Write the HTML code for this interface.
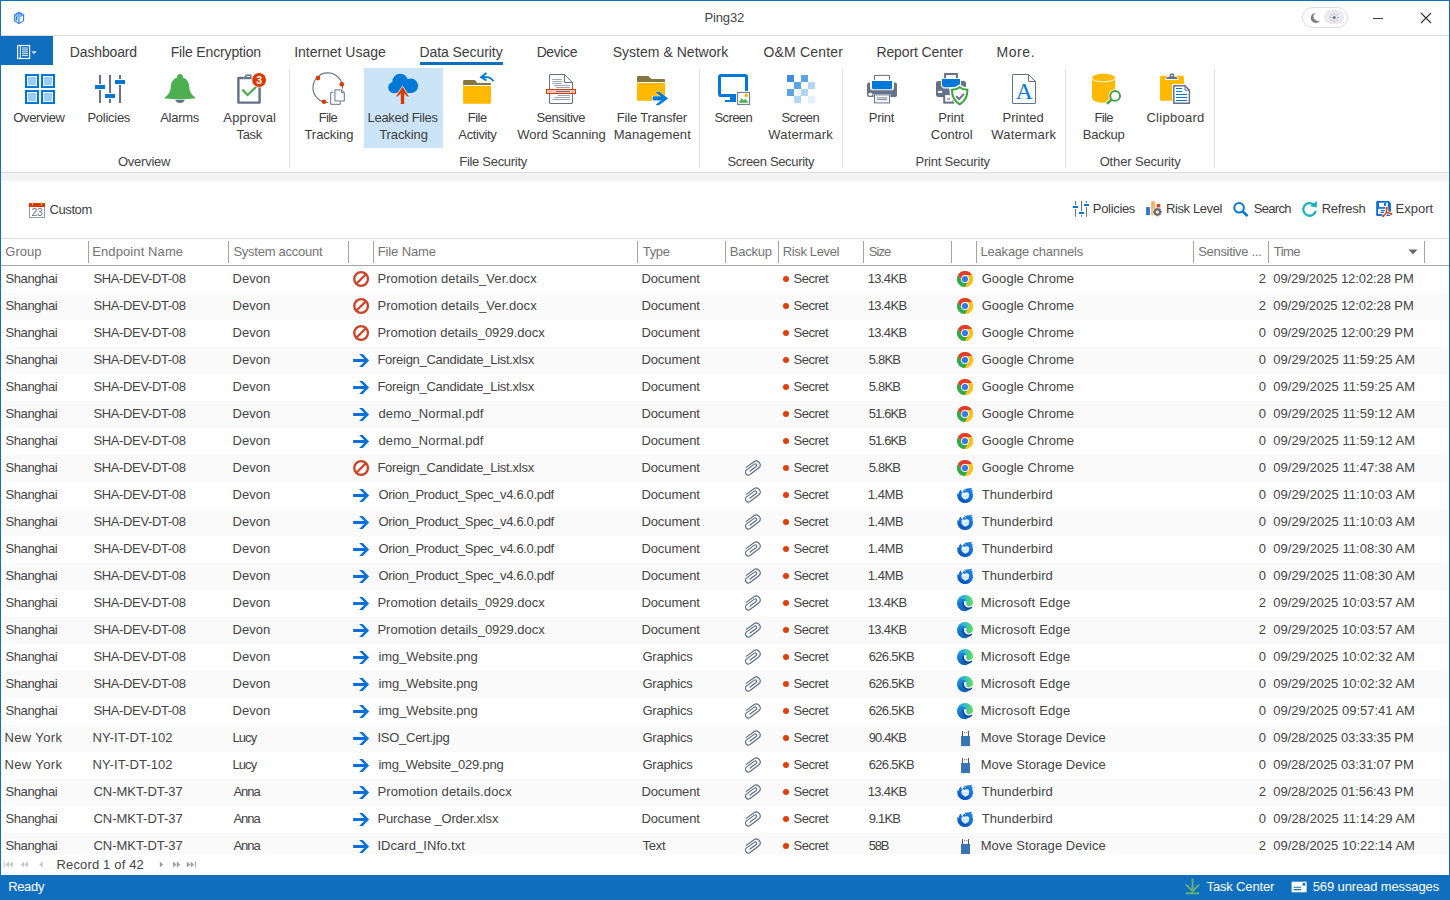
<!DOCTYPE html>
<html><head><meta charset="utf-8"><title>Ping32</title>
<style>
html,body{margin:0;padding:0;}
body{width:1450px;height:900px;overflow:hidden;background:#fff;font-family:"Liberation Sans",sans-serif;}
#win{position:relative;width:1450px;height:900px;overflow:hidden;background:#fff;}
.r{position:absolute;display:block;}
.t{position:absolute;white-space:pre;height:20px;line-height:20px;}
</style></head><body><div id="win">
<div class="r" style="left:0px;top:0px;width:1450px;height:1px;background:#106ebe;"></div>
<div class="r" style="left:0px;top:0px;width:1px;height:900px;background:#106ebe;"></div>
<div class="r" style="left:1449px;top:0px;width:1px;height:900px;background:#106ebe;"></div>
<div class="r" style="left:1px;top:35px;width:1448px;height:1px;background:#dcdcdc;"></div>
<span class="t" style="left:704.55px;top:8.00px;font-size:13px;color:#444;letter-spacing:-0.160px;">Ping32</span>
<div class="r" style="left:1302px;top:7px;width:44px;height:19px;background:#fff;border:1px solid #dcdcdc;border-radius:11px;"></div>
<div class="r" style="left:1324px;top:10px;width:20px;height:14px;background:#ebebef;border-radius:7px;"></div>
<div class="r" style="left:1373px;top:18px;width:10px;height:1px;background:#3d3d3d;"></div>
<svg class="r" style="left:1420px;top:12px" width="12" height="12" viewBox="0 0 12 12"><path d="M1 1 L11 11 M11 1 L1 11" stroke="#333" stroke-width="1.1" fill="none"/></svg>
<div class="r" style="left:0px;top:36px;width:53px;height:29px;background:#106ebe;"></div>
<span class="t" style="left:69.85px;top:42.20px;font-size:14px;color:#3d3d3d;letter-spacing:-0.162px;">Dashboard</span>
<span class="t" style="left:170.65px;top:42.20px;font-size:14px;color:#3d3d3d;letter-spacing:-0.150px;">File Encryption</span>
<span class="t" style="left:294.25px;top:42.20px;font-size:14px;color:#3d3d3d;letter-spacing:-0.031px;">Internet Usage</span>
<span class="t" style="left:419.45px;top:42.20px;font-size:14px;color:#3d3d3d;letter-spacing:-0.067px;">Data Security</span>
<span class="t" style="left:536.65px;top:42.20px;font-size:14px;color:#3d3d3d;letter-spacing:-0.400px;">Device</span>
<span class="t" style="left:612.65px;top:42.20px;font-size:14px;color:#3d3d3d;letter-spacing:0.033px;">System &amp; Network</span>
<span class="t" style="left:763.45px;top:42.20px;font-size:14px;color:#3d3d3d;letter-spacing:0.189px;">O&amp;M Center</span>
<span class="t" style="left:876.45px;top:42.20px;font-size:14px;color:#3d3d3d;letter-spacing:-0.108px;">Report Center</span>
<span class="t" style="left:996.45px;top:42.20px;font-size:14px;color:#3d3d3d;letter-spacing:0.575px;">More.</span>
<div class="r" style="left:420px;top:62px;width:83px;height:3px;background:#106ebe;"></div>
<div class="r" style="left:364px;top:68px;width:79px;height:80px;background:#cce4f7;"></div>
<div class="r" style="left:289px;top:69px;width:1px;height:99px;background:#e1e1e1;"></div>
<div class="r" style="left:699px;top:69px;width:1px;height:99px;background:#e1e1e1;"></div>
<div class="r" style="left:842px;top:69px;width:1px;height:99px;background:#e1e1e1;"></div>
<div class="r" style="left:1065px;top:69px;width:1px;height:99px;background:#e1e1e1;"></div>
<div class="r" style="left:1214px;top:69px;width:1px;height:99px;background:#e1e1e1;"></div>
<span class="t" style="left:13.25px;top:107.50px;font-size:13px;color:#3d3d3d;letter-spacing:-0.357px;">Overview</span>
<span class="t" style="left:87.45px;top:107.50px;font-size:13px;color:#3d3d3d;letter-spacing:-0.271px;">Policies</span>
<span class="t" style="left:160.25px;top:107.50px;font-size:13px;color:#3d3d3d;letter-spacing:-0.300px;">Alarms</span>
<span class="t" style="left:223.35px;top:107.50px;font-size:13px;color:#3d3d3d;letter-spacing:0.186px;">Approval</span>
<span class="t" style="left:236.45px;top:124.50px;font-size:13px;color:#3d3d3d;letter-spacing:-0.300px;">Task</span>
<span class="t" style="left:318.85px;top:107.50px;font-size:13px;color:#3d3d3d;letter-spacing:-0.700px;">File</span>
<span class="t" style="left:304.45px;top:124.50px;font-size:13px;color:#3d3d3d;letter-spacing:-0.043px;">Tracking</span>
<span class="t" style="left:367.55px;top:107.50px;font-size:13px;color:#3d3d3d;letter-spacing:-0.300px;">Leaked Files</span>
<span class="t" style="left:379.25px;top:124.50px;font-size:13px;color:#3d3d3d;letter-spacing:-0.100px;">Tracking</span>
<span class="t" style="left:467.65px;top:107.50px;font-size:13px;color:#3d3d3d;letter-spacing:-0.433px;">File</span>
<span class="t" style="left:458.35px;top:124.50px;font-size:13px;color:#3d3d3d;letter-spacing:-0.386px;">Activity</span>
<span class="t" style="left:536.55px;top:107.50px;font-size:13px;color:#3d3d3d;letter-spacing:-0.462px;">Sensitive</span>
<span class="t" style="left:517.35px;top:124.50px;font-size:13px;color:#3d3d3d;letter-spacing:-0.025px;">Word Scanning</span>
<span class="t" style="left:616.65px;top:107.50px;font-size:13px;color:#3d3d3d;letter-spacing:-0.142px;">File Transfer</span>
<span class="t" style="left:613.65px;top:124.50px;font-size:13px;color:#3d3d3d;letter-spacing:0.144px;">Management</span>
<span class="t" style="left:714.45px;top:107.50px;font-size:13px;color:#3d3d3d;letter-spacing:-0.580px;">Screen</span>
<span class="t" style="left:781.45px;top:107.50px;font-size:13px;color:#3d3d3d;letter-spacing:-0.580px;">Screen</span>
<span class="t" style="left:768.35px;top:124.50px;font-size:13px;color:#3d3d3d;letter-spacing:0.163px;">Watermark</span>
<span class="t" style="left:868.85px;top:107.50px;font-size:13px;color:#3d3d3d;letter-spacing:-0.325px;">Print</span>
<span class="t" style="left:938.15px;top:107.50px;font-size:13px;color:#3d3d3d;letter-spacing:-0.175px;">Print</span>
<span class="t" style="left:930.75px;top:124.50px;font-size:13px;color:#3d3d3d;letter-spacing:0.017px;">Control</span>
<span class="t" style="left:1002.55px;top:107.50px;font-size:13px;color:#3d3d3d;letter-spacing:0.017px;">Printed</span>
<span class="t" style="left:991.35px;top:124.50px;font-size:13px;color:#3d3d3d;letter-spacing:0.188px;">Watermark</span>
<span class="t" style="left:1094.55px;top:107.50px;font-size:13px;color:#3d3d3d;letter-spacing:-0.633px;">File</span>
<span class="t" style="left:1082.75px;top:124.50px;font-size:13px;color:#3d3d3d;letter-spacing:-0.260px;">Backup</span>
<span class="t" style="left:1146.40px;top:107.50px;font-size:13px;color:#3d3d3d;letter-spacing:0.275px;">Clipboard</span>
<span class="t" style="left:117.90px;top:152.00px;font-size:13px;color:#444;letter-spacing:-0.229px;">Overview</span>
<span class="t" style="left:459.25px;top:152.00px;font-size:13px;color:#444;letter-spacing:-0.292px;">File Security</span>
<span class="t" style="left:727.45px;top:152.00px;font-size:13px;color:#444;letter-spacing:-0.336px;">Screen Security</span>
<span class="t" style="left:915.45px;top:152.00px;font-size:13px;color:#444;letter-spacing:-0.208px;">Print Security</span>
<span class="t" style="left:1099.65px;top:152.00px;font-size:13px;color:#444;letter-spacing:-0.146px;">Other Security</span>
<div class="r" style="left:1px;top:172px;width:1448px;height:1px;background:#dcdcdc;"></div>
<div class="r" style="left:1px;top:173px;width:1448px;height:8px;background:#f3f3f3;"></div>
<span class="t" style="left:49.55px;top:199.50px;font-size:13px;color:#3d3d3d;letter-spacing:-0.420px;">Custom</span>
<span class="t" style="left:1092.85px;top:198.50px;font-size:13px;color:#3d3d3d;letter-spacing:-0.329px;">Policies</span>
<span class="t" style="left:1165.95px;top:198.50px;font-size:13px;color:#3d3d3d;letter-spacing:-0.389px;">Risk Level</span>
<span class="t" style="left:1253.85px;top:198.50px;font-size:13px;color:#3d3d3d;letter-spacing:-0.700px;">Search</span>
<span class="t" style="left:1321.75px;top:198.50px;font-size:13px;color:#3d3d3d;letter-spacing:-0.267px;">Refresh</span>
<span class="t" style="left:1395.55px;top:198.50px;font-size:13px;color:#3d3d3d;letter-spacing:0.020px;">Export</span>
<div class="r" style="left:0px;top:875px;width:1450px;height:25px;background:#106ebe;"></div>
<span class="t" style="left:8.15px;top:876.50px;font-size:13px;color:#fff;letter-spacing:-0.325px;">Ready</span>
<span class="t" style="left:1206.55px;top:876.50px;font-size:13px;color:#fff;letter-spacing:-0.160px;">Task Center</span>
<span class="t" style="left:1312.75px;top:876.50px;font-size:13px;color:#fff;letter-spacing:-0.122px;">569 unread messages</span>
<span class="t" style="left:56.45px;top:854.50px;font-size:13px;color:#444;letter-spacing:0.162px;">Record 1 of 42</span>
<svg class="r" style="left:12px;top:10px" width="14" height="16" viewBox="0 0 14 16"><path d="M7 2.2 L11.6 5 L7 7.9 L2.5 4.9 Z" fill="#4c95f6"/>
<path d="M2.5 4.9 L7 7.9 V13.6 L2.5 10.9 Z" fill="#9cc4fb" fill-opacity=".7"/>
<path d="M4.9 3.7 L9.3 6.4 M3.6 4.4 L8 7.2 M8.6 3.3 L4.2 6 M10.2 4.2 L5.8 7" stroke="#a9cdfc" stroke-width=".6"/>
<g fill="none" stroke="#2f7cf0" stroke-width="1.1" stroke-linejoin="round">
<path d="M7 2.2 L11.6 5 L11.6 10.6 L7 13.6 L2.5 10.9 L2.5 4.9 Z"/><path d="M7 7.9 V13.6"/></g>
<rect x="4" y="6.4" width="1" height="3.8" rx=".4" fill="#246fe6"/></svg>
<svg class="r" style="left:16px;top:44px" width="24" height="16" viewBox="0 0 24 16"><rect x="1.6" y="1.5" width="12" height="13" fill="none" stroke="#fff" stroke-width="1.2"/>
<path d="M4.3 1.5 V14.5" stroke="#fff" stroke-width="1"/>
<path d="M6 4 H12 M6 5.9 H12 M6 7.8 H12 M6 9.7 H12 M6 11.6 H12" stroke="#fff" stroke-width=".9"/>
<path d="M15.3 7.2 H20.7 L18 10.2 Z" fill="#d6e6f6"/></svg>
<svg class="r" style="left:1308px;top:11px" width="14" height="14" viewBox="0 0 14 14"><path d="M7.6 1.9 A5 5 0 1 0 12.1 9.3 A4.2 4.2 0 0 1 7.6 1.9 Z" fill="#808080"/></svg>
<svg class="r" style="left:1327px;top:10px" width="14" height="14" viewBox="0 0 14 14"><circle cx="7.2" cy="7.5" r="1.5" fill="#6a7896"/>
<g stroke="#9aa3b5" stroke-width=".9"><path d="M7.2 2.8 V4.6 M7.2 10.4 V12.2 M2.5 7.5 H4.3 M10.1 7.5 H11.9 M3.9 4.2 L5.1 5.4 M9.3 9.6 L10.5 10.8 M3.9 10.8 L5.1 9.6 M9.3 5.4 L10.5 4.2"/></g></svg>
<svg class="r" style="left:22px;top:70px" width="36" height="38" viewBox="0 0 36 38"><rect x="4" y="5" width="12" height="12" fill="#fff" stroke="#0078d7" stroke-width="2"/><rect x="6" y="7" width="8" height="8" fill="#99ccff"/><rect x="20" y="5" width="12" height="12" fill="#fff" stroke="#0078d7" stroke-width="2"/><rect x="22" y="7" width="8" height="8" fill="#99ccff"/><rect x="4" y="21" width="12" height="12" fill="#fff" stroke="#0078d7" stroke-width="2"/><rect x="6" y="23" width="8" height="8" fill="#99ccff"/><rect x="20" y="21" width="12" height="12" fill="#fff" stroke="#0078d7" stroke-width="2"/><rect x="22" y="23" width="8" height="8" fill="#99ccff"/></svg>
<svg class="r" style="left:92px;top:70px" width="36" height="38" viewBox="0 0 36 38"><g fill="#647189"><rect x="7" y="5" width="2" height="9"/><rect x="7" y="20" width="2" height="13"/>
<rect x="17" y="5" width="2" height="18"/><rect x="17" y="29" width="2" height="4"/>
<rect x="27" y="5" width="2" height="4"/><rect x="27" y="15" width="2" height="18"/></g>
<g fill="#0078d7"><rect x="3" y="15" width="10" height="4"/><rect x="13" y="24" width="10" height="4"/><rect x="23" y="10" width="10" height="4"/></g></svg>
<svg class="r" style="left:162px;top:70px" width="36" height="38" viewBox="0 0 36 38"><path d="M13.2 29.8 A5 4.6 0 0 0 22.8 29.8 Z" fill="#647189"/>
<path d="M18 3.9 a3 3 0 0 1 2.9 3.7 C25.5 9.2 27 13 27.3 17.5 C27.7 22.5 30 25 33 27.3 C33.4 27.8 33 28.5 32.3 28.6 C23 29.4 13 29.4 3.7 28.6 C3 28.5 2.6 27.8 3 27.3 C6 25 8.3 22.5 8.7 17.5 C9 13 10.5 9.2 15.1 7.6 A3 3 0 0 1 18 3.9 Z" fill="#4caf50"/></svg>
<svg class="r" style="left:232px;top:70px" width="38" height="38" viewBox="0 0 38 38"><path d="M11.5 8 H6.4 V32.6 H27.6 V8" fill="none" stroke="#647189" stroke-width="2.4" stroke-linejoin="round"/>
<path d="M12 8.2 L14.5 5.2 H18.6 V8.2" fill="none" stroke="#647189" stroke-width="1.6"/><rect x="11.6" y="7" width="8" height="2.2" fill="#647189"/>
<path d="M10.3 19.6 L15.6 25 L24.4 16.6" fill="none" stroke="#4caf50" stroke-width="2.3"/>
<circle cx="27.1" cy="10" r="7.6" fill="#fff"/><circle cx="27.1" cy="10" r="7" fill="#d83b01"/>
<text x="27.1" y="13.9" font-family="Liberation Sans" font-weight="700" font-size="10.5" fill="#fff" text-anchor="middle">3</text></svg>
<svg class="r" style="left:310px;top:70px" width="38" height="38" viewBox="0 0 38 38"><path d="M18.32 32.49 A14.8 14.8 0 1 1 32.56 18.73" fill="none" stroke="#647189" stroke-width="1.15"/>
<circle cx="8" cy="8.1" r="2.3" fill="#d83b01"/><circle cx="31.8" cy="14.2" r="2.3" fill="#d83b01"/><circle cx="14" cy="31.7" r="2.3" fill="#d83b01"/>
<path d="M23.3 22.3 H20.7 V34.3 H30.3 V31.6" fill="none" stroke="#647189" stroke-width="1"/>
<path d="M24.9 19.9 H31.5 L34.3 22.7 V31 H24.9 Z" fill="#fff" stroke="#647189" stroke-width="1"/>
<path d="M31.5 19.9 V22.7 H34.3" fill="none" stroke="#647189" stroke-width=".9"/></svg>
<svg class="r" style="left:385px;top:70px" width="36" height="38" viewBox="0 0 36 38"><g fill="#0078d7"><circle cx="15.2" cy="11.6" r="7.8"/><circle cx="25.9" cy="15.8" r="7.2"/><circle cx="9" cy="17.5" r="5.8"/><rect x="9" y="15" width="17" height="8"/></g>
<path d="M17.5 15.6 L25 26.6 H20.4 V34.2 H14.6 V26.6 H10 Z" fill="#cfe4f7"/>
<path d="M17.5 16.8 L23.9 26.4 L22.4 26.4 L19.2 23.2 V33.9 H15.8 V23.2 L12.6 26.4 L11.1 26.4 Z" fill="#d83b01"/></svg>
<svg class="r" style="left:460px;top:70px" width="36" height="38" viewBox="0 0 36 38"><path d="M3.1 11.2 a1.2 1.2 0 0 1 1.2 -1.2 H14.6 a1 1 0 0 1 .8 .4 L17.3 13.1 H30 a1 1 0 0 1 1 1 V15 H3.1 Z" fill="#847545"/>
<path d="M3.1 16 H31 V33 a.8 .8 0 0 1 -.8 .8 H3.9 a.8 .8 0 0 1 -.8 -.8 Z" fill="#ffb900"/>
<path d="M26.5 3 L21.1 7.1 L26.5 10.5 M21.6 7.1 H26.4 C30 7.1 32 9 33.3 11.3" fill="none" stroke="#0078d7" stroke-width="1.9"/></svg>
<svg class="r" style="left:544px;top:70px" width="36" height="38" viewBox="0 0 36 38"><path d="M6 4.5 H20.5 L28.5 12.5 V33 a.5 .5 0 0 1 -.5 .5 H6 a.5 .5 0 0 1 -.5 -.5 V5 a.5 .5 0 0 1 .5 -.5 Z" fill="#fff" stroke="#647189" stroke-width="1"/>
<path d="M20.5 4.5 V12 a.5 .5 0 0 0 .5 .5 H28.5" fill="none" stroke="#647189" stroke-width="1"/>
<path d="M8.2 9.5 H17.8 M8.2 11.5 H17.8 M8.2 13.5 H17.8 M10.1 15.5 H26 M12 17.5 H26 M14 25.5 H26 M10.1 27.5 H26 M8.2 29.5 H26" stroke="#9aa5b8" stroke-width="1"/>
<rect x="2.5" y="19.5" width="29" height="4" fill="#f6c7b8" stroke="#d83b01" stroke-width="1"/>
<path d="M12 21.5 H26" stroke="#647189" stroke-width="1"/><path d="M5.5 20.6 V22.4 M28.5 20.6 V22.4" stroke="#c98b7c" stroke-width=".7"/></svg>
<svg class="r" style="left:634px;top:70px" width="38" height="38" viewBox="0 0 38 38"><path d="M3 7.2 a1.2 1.2 0 0 1 1.2 -1.2 H14 a1 1 0 0 1 .8 .4 L17.3 8.9 H30 a1 1 0 0 1 1 1 V11.9 H3 Z" fill="#847545"/>
<path d="M3 12.9 H31 V30 a.8 .8 0 0 1 -.8 .8 H3.8 a.8 .8 0 0 1 -.8 -.8 Z" fill="#ffb900"/>
<path d="M24 21 L34.6 28.4 L24 36 H21.8 L27.4 31 H18.2 V25.8 H27.4 L21.8 21 Z" fill="#fff"/>
<path d="M25 22.1 L33.5 28.4 L25 34.7 H22.4 L28 30 H19.1 V26.8 H28 L22.4 22.1 Z" fill="#0078d7" stroke="#0078d7" stroke-width=".9" stroke-linejoin="round"/></svg>
<svg class="r" style="left:715px;top:70px" width="38" height="38" viewBox="0 0 38 38"><rect x="4.5" y="5.4" width="27" height="20.2" rx="1.6" fill="#fff" stroke="#0078d7" stroke-width="3"/>
<rect x="15" y="26.5" width="6" height="3.6" fill="#0078d7"/><rect x="10" y="30" width="11" height="2" fill="#0078d7"/>
<rect x="21.1" y="20.9" width="15" height="15" fill="#fff"/>
<rect x="22.6" y="22.4" width="12" height="12" fill="#fff" stroke="#647189" stroke-width="1"/>
<circle cx="31.3" cy="25.4" r="1.8" fill="#ffb900"/>
<path d="M23.6 32.8 L26.8 28.3 L28.8 30.6 L30.4 28.8 L33.5 32.8 Z" fill="#4caf50"/></svg>
<svg class="r" style="left:784px;top:70px" width="36" height="38" viewBox="0 0 36 38"><rect x="3" y="5" width="7" height="7" fill="#3a8fe0"/><rect x="17" y="5" width="7" height="7" fill="#5ba5e6"/><rect x="10" y="12" width="7" height="7" fill="#5ba5e6"/><rect x="24" y="12" width="7" height="7" fill="#b3d6f5"/><rect x="3" y="19" width="7" height="7" fill="#5ba5e6"/><rect x="17" y="19" width="7" height="7" fill="#b3d6f5"/><rect x="10" y="26" width="7" height="7" fill="#b3d6f5"/><rect x="24" y="26" width="7" height="7" fill="#e3f0fc"/></svg>
<svg class="r" style="left:864px;top:70px" width="36" height="38" viewBox="0 0 36 38"><rect x="10.5" y="5.4" width="15" height="8" fill="#fff" stroke="#647189" stroke-width="1"/>
<rect x="3" y="12.4" width="30" height="14.6" rx="2" fill="#647189"/>
<path d="M6.1 10 H29.9 V18.2 a2 2 0 0 1 -2 2 H8.1 a2 2 0 0 1 -2 -2 Z" fill="#fff"/>
<path d="M8 11 H28 V17.7 a1.5 1.5 0 0 1 -1.5 1.5 H9.5 a1.5 1.5 0 0 1 -1.5 -1.5 Z" fill="#0078d7"/>
<rect x="4.4" y="22.7" width="4" height="3" rx="1.5" fill="#fff"/>
<rect x="9.6" y="24" width="16.8" height="4" fill="#fff"/><rect x="10.5" y="24.9" width="15" height="8" fill="#fff" stroke="#647189" stroke-width="1"/>
<path d="M12.7 27.9 H23.3 M12.7 29.7 H23.3" stroke="#647189" stroke-width=".9"/></svg>
<svg class="r" style="left:933px;top:70px" width="38" height="38" viewBox="0 0 38 38"><rect x="12.1" y="4" width="11.8" height="7" fill="#fff" stroke="#647189" stroke-width="2"/>
<rect x="3" y="11" width="30" height="16" rx="2.2" fill="#647189"/>
<path d="M8 8.2 H28 V16 L25.6 18.4 H10.4 L8 16 Z" fill="#fff"/>
<path d="M9 9 H27 V15.5 L25 17.3 H11 L9 15.5 Z" fill="#0078d7"/>
<rect x="5.1" y="20.9" width="4" height="2" fill="#fff"/>
<rect x="11.2" y="24" width="9" height="8.6" fill="#fff" stroke="#647189" stroke-width="2"/>
<path d="M14 29 H17" stroke="#647189" stroke-width="1.2"/>
<path d="M26.7 15.8 C24 18 21 18.6 17.6 18.8 C17.3 26.5 20 32 26.7 35.8 C33.4 32 36.1 26.5 35.8 18.8 C32.4 18.6 29.4 18 26.7 15.8 Z" fill="#fff" stroke="#fff" stroke-width="2.4"/>
<path d="M26.7 17.2 C24.3 19 21.8 19.6 19 19.8 C18.9 26.3 21 31 26.7 34.4 C32.4 31 34.5 26.3 34.4 19.8 C31.6 19.6 29.1 19 26.7 17.2 Z" fill="#fff" stroke="#3aa53a" stroke-width="2"/>
<path d="M23.2 26.2 L26.1 29.1 L30.9 23.8" fill="none" stroke="#647189" stroke-width="2"/></svg>
<svg class="r" style="left:1008px;top:70px" width="36" height="38" viewBox="0 0 36 38"><path d="M5 4.5 H20.5 L27.5 11.5 V33 a.5 .5 0 0 1 -.5 .5 H5 a.5 .5 0 0 1 -.5 -.5 V5 a.5 .5 0 0 1 .5 -.5 Z" fill="#fff" stroke="#647189" stroke-width="1"/>
<path d="M20.5 4.5 V11 a.5 .5 0 0 0 .5 .5 H27.5" fill="none" stroke="#647189" stroke-width="1"/>
<text x="16.2" y="28.7" font-family="Liberation Serif" font-size="23.5" fill="#0078d7" text-anchor="middle">A</text></svg>
<svg class="r" style="left:1088px;top:70px" width="38" height="38" viewBox="0 0 38 38"><path d="M4 8 V27.5 C4 34.5 27.1 34.5 27.1 27.5 V8 Z" fill="#ffb900"/>
<ellipse cx="15.55" cy="7.5" rx="11.55" ry="3.7" fill="#ffb900" stroke="#fff" stroke-width="0"/>
<path d="M4 8.2 C4 13 27.1 13 27.1 8.2" fill="none" stroke="#fff" stroke-width="1"/>
<circle cx="27.1" cy="25.9" r="6.6" fill="#fff"/><path d="M23.4 30 L18.2 34.6" stroke="#fff" stroke-width="4.4"/>
<circle cx="27.1" cy="25.9" r="4.9" fill="#fff" stroke="#43a047" stroke-width="2"/>
<path d="M23.3 29.9 L18.9 33.9" stroke="#43a047" stroke-width="2.6"/></svg>
<svg class="r" style="left:1156px;top:70px" width="38" height="38" viewBox="0 0 38 38"><rect x="4" y="5.8" width="24" height="25" rx="1.6" fill="#ffb900"/>
<path d="M8.6 10 L10.9 6.2 H12.6 V5.4 a3.3 3.3 0 0 1 6.6 0 V6.2 H20.9 L23.2 10 Z" fill="#fff"/>
<path d="M9.9 9.1 L11.5 7 H13.5 V5.6 a2.4 2.4 0 0 1 4.8 0 V7 H20.3 L21.9 9.1 Z" fill="#647189"/><circle cx="15.9" cy="5.5" r=".85" fill="#fff"/>
<path d="M16 14 H29.5 L35.2 19.6 V35 H16 Z" fill="#fff"/>
<path d="M17.8 15.8 H29 L33.4 20.2 V33.2 H17.8 Z" fill="#fff" stroke="#647189" stroke-width="1.5" stroke-linejoin="round"/>
<path d="M29 15.8 V20.2 H33.4" fill="none" stroke="#647189" stroke-width="1"/>
<path d="M20 18.5 H26 M20 21.5 H26 M20 24.5 H31 M20 27.5 H31 M20 30.5 H31" stroke="#0078d7" stroke-width="1"/></svg>
<svg class="r" style="left:28px;top:200px" width="19" height="20" viewBox="0 0 19 20"><rect x="1.5" y="3.5" width="15" height="14" fill="#fff" stroke="#8e99ab" stroke-width="1"/>
<rect x="1" y="3" width="16" height="4" fill="#d83b01"/>
<path d="M4.4 2 V5.2 M13.4 2 V5.2" stroke="#c9ced6" stroke-width="1"/>
<text x="9.05" y="15.9" font-family="Liberation Sans" font-size="10.3" fill="#647189" text-anchor="middle" letter-spacing="-.3">23</text></svg>
<svg class="r" style="left:1072px;top:200px" width="19" height="18" viewBox="0 0 19 18"><path d="M3.5 1 V5 M3.5 9 V16.8 M9.5 1 V11 M9.5 15 V16.8 M14.5 1 V3 M14.5 7 V16.8" stroke="#647189" stroke-width="1"/>
<path d="M.8 7 H6 M7 13 H12 M12 5 H17" stroke="#0078d7" stroke-width="2"/></svg>
<svg class="r" style="left:1145px;top:200px" width="18" height="18" viewBox="0 0 18 18"><rect x="1.1" y="7.1" width="3.8" height="8" fill="#2e75c6"/><rect x="6.2" y="1.2" width="3.8" height="13.9" fill="#f2b45c"/>
<rect x="11.7" y="3.9" width="3.6" height="5" fill="#d24a2b"/>
<g transform="translate(12.4 11.9)"><circle r="4.9" fill="#fff"/>
<path d="M0 -4.4 L1 -4.3 L1.3 -3.1 L2.4 -3.7 L3.7 -2.4 L3.1 -1.3 L4.3 -1 V1 L3.1 1.3 L3.7 2.4 L2.4 3.7 L1.3 3.1 L1 4.3 H-1 L-1.3 3.1 L-2.4 3.7 L-3.7 2.4 L-3.1 1.3 L-4.3 1 V-1 L-3.1 -1.3 L-3.7 -2.4 L-2.4 -3.7 L-1.3 -3.1 L-1 -4.3 Z" fill="#6e6e6e"/><circle r="1.5" fill="#fff"/></g></svg>
<svg class="r" style="left:1231px;top:200px" width="19" height="18" viewBox="0 0 19 18"><circle cx="8.1" cy="7.8" r="4.8" fill="none" stroke="#0078d7" stroke-width="2"/><path d="M11.6 11.6 L16.6 15.9" stroke="#0078d7" stroke-width="2.6"/></svg>
<svg class="r" style="left:1300px;top:199px" width="20" height="19" viewBox="0 0 20 19"><path d="M13.48 5.44 A6.3 6.3 0 1 0 15.71 11.92" fill="none" stroke="#1ab2c2" stroke-width="2.3"/>
<path d="M16.8 1.9 V8.5 L9.9 7.2 Z" fill="#1ab2c2"/></svg>
<svg class="r" style="left:1375px;top:200px" width="19" height="19" viewBox="0 0 19 19"><path d="M2.1 1.9 H13.2 L14.9 3.6 V15 H2.1 Z" fill="#fff" stroke="#0a6ed6" stroke-width="1.8" stroke-linejoin="round"/>
<rect x="12.9" y="2.6" width="2.6" height="9.2" fill="#0a6ed6"/><rect x="2.4" y="2.2" width="1.6" height="5.4" fill="#0a6ed6"/>
<rect x="2.2" y="7.1" width="11" height="1.7" fill="#0a6ed6"/>
<rect x="9" y="3.1" width="2" height="2.7" fill="#0a6ed6"/>
<path d="M5.6 10.5 H10 M5.6 12.4 H9.3" stroke="#0a6ed6" stroke-width="1.1"/>
<g fill="none" stroke="#fff" stroke-width="3.4" stroke-linecap="round"><path d="M11.7 8 C11.8 10 11.6 11.6 11.2 12.7 C10.4 14.4 9.2 15.5 8.1 16 M11.3 12.6 C12.9 12.7 14.8 13.1 16.4 13.9"/></g>
<g fill="none" stroke="#e0470f" stroke-width="1.5" stroke-linecap="round"><path d="M11.7 8 C11.8 10 11.6 11.6 11.2 12.7 C10.4 14.4 9.2 15.5 8.1 16 M11.3 12.6 C12.9 12.7 14.8 13.1 16.4 13.9"/></g>
<circle cx="11.7" cy="8.1" r="1.25" fill="#e0470f"/><circle cx="8.2" cy="15.9" r="1.2" fill="#e0470f"/><circle cx="16.3" cy="13.9" r="1.1" fill="#e0470f"/></svg>
<svg class="r" style="left:0px;top:858px" width="210" height="14" viewBox="0 0 210 14"><rect x="3.6" y="3.4" width="1" height="6" fill="#c6c6c6"/><path d="M9.0 3.4000000000000004 L5.5 6.4 L9.0 9.4 Z" fill="#c6c6c6"/><path d="M12.8 3.4000000000000004 L9.3 6.4 L12.8 9.4 Z" fill="#c6c6c6"/><path d="M24.2 3.4000000000000004 L20.7 6.4 L24.2 9.4 Z" fill="#c6c6c6"/><path d="M28.0 3.4000000000000004 L24.5 6.4 L28.0 9.4 Z" fill="#c6c6c6"/><path d="M42.7 3.4000000000000004 L39.2 6.4 L42.7 9.4 Z" fill="#c6c6c6"/><path d="M159.8 3.4000000000000004 L163.3 6.4 L159.8 9.4 Z" fill="#9e9e9e"/><path d="M173 3.4000000000000004 L176.5 6.4 L173 9.4 Z" fill="#9e9e9e"/><path d="M176.8 3.4000000000000004 L180.3 6.4 L176.8 9.4 Z" fill="#9e9e9e"/><path d="M186.8 3.4000000000000004 L190.3 6.4 L186.8 9.4 Z" fill="#9e9e9e"/><path d="M190.6 3.4000000000000004 L194.1 6.4 L190.6 9.4 Z" fill="#9e9e9e"/><rect x="195" y="3.4" width="1" height="6" fill="#9e9e9e"/></svg>
<svg class="r" style="left:1184px;top:877px" width="18" height="18" viewBox="0 0 18 18"><path d="M8.6 1.6 V13 M1.9 7.4 L8.6 14.2 L15.2 7.4 M1.8 16.3 H15.2" fill="none" stroke="#5fae78" stroke-width="2"/></svg>
<svg class="r" style="left:1290px;top:880px" width="18" height="14" viewBox="0 0 18 14"><rect x="1.6" y="1.7" width="15" height="10.6" fill="#fff"/><rect x="12.6" y="3" width="2.6" height="2.6" fill="#106ebe"/>
<path d="M3.6 7.2 H11 M3.6 9.6 H11" stroke="#106ebe" stroke-width="1.1"/></svg>
<div class="r" style="left:1px;top:238px;width:1448px;height:1px;background:#dcdcdc;"></div>
<div class="r" style="left:1px;top:265px;width:1448px;height:1px;background:#a6a6a6;"></div>
<div class="r" style="left:88px;top:241px;width:1px;height:22px;background:#a4a4a4;"></div>
<div class="r" style="left:228px;top:241px;width:1px;height:22px;background:#a4a4a4;"></div>
<div class="r" style="left:348px;top:241px;width:1px;height:22px;background:#a4a4a4;"></div>
<div class="r" style="left:373px;top:241px;width:1px;height:22px;background:#a4a4a4;"></div>
<div class="r" style="left:637px;top:241px;width:1px;height:22px;background:#a4a4a4;"></div>
<div class="r" style="left:725px;top:241px;width:1px;height:22px;background:#a4a4a4;"></div>
<div class="r" style="left:778px;top:241px;width:1px;height:22px;background:#a4a4a4;"></div>
<div class="r" style="left:863px;top:241px;width:1px;height:22px;background:#a4a4a4;"></div>
<div class="r" style="left:951px;top:241px;width:1px;height:22px;background:#a4a4a4;"></div>
<div class="r" style="left:976px;top:241px;width:1px;height:22px;background:#a4a4a4;"></div>
<div class="r" style="left:1193px;top:241px;width:1px;height:22px;background:#a4a4a4;"></div>
<div class="r" style="left:1268px;top:241px;width:1px;height:22px;background:#a4a4a4;"></div>
<div class="r" style="left:1424px;top:241px;width:1px;height:22px;background:#a4a4a4;"></div>
<span class="t" style="left:5.35px;top:241.50px;font-size:13px;color:#737373;letter-spacing:0.025px;">Group</span>
<span class="t" style="left:92.25px;top:241.50px;font-size:13px;color:#737373;letter-spacing:0.100px;">Endpoint Name</span>
<span class="t" style="left:233.45px;top:241.50px;font-size:13px;color:#737373;letter-spacing:-0.254px;">System account</span>
<span class="t" style="left:377.65px;top:241.50px;font-size:13px;color:#737373;letter-spacing:-0.112px;">File Name</span>
<span class="t" style="left:642.75px;top:241.50px;font-size:13px;color:#737373;letter-spacing:-0.300px;">Type</span>
<span class="t" style="left:729.65px;top:241.50px;font-size:13px;color:#737373;letter-spacing:-0.180px;">Backup</span>
<span class="t" style="left:782.65px;top:241.50px;font-size:13px;color:#737373;letter-spacing:-0.344px;">Risk Level</span>
<span class="t" style="left:868.85px;top:241.50px;font-size:13px;color:#737373;letter-spacing:-0.967px;">Size</span>
<span class="t" style="left:980.45px;top:241.50px;font-size:13px;color:#737373;letter-spacing:-0.187px;">Leakage channels</span>
<span class="t" style="left:1198.25px;top:241.50px;font-size:13px;color:#737373;letter-spacing:-0.317px;">Sensitive ...</span>
<span class="t" style="left:1273.75px;top:241.50px;font-size:13px;color:#737373;letter-spacing:-0.533px;">Time</span>
<svg class="r" style="left:1408px;top:249px" width="10" height="6" viewBox="0 0 10 6"><path d="M.5 .6 L9.5 .6 L5 5.4 Z" fill="#6a6a6a"/></svg>
<span class="t" style="left:5.45px;top:268.50px;font-size:13px;color:#444;letter-spacing:-0.386px;">Shanghai</span>
<span class="t" style="left:93.45px;top:268.50px;font-size:13px;color:#444;letter-spacing:-0.358px;">SHA-DEV-DT-08</span>
<span class="t" style="left:232.45px;top:268.50px;font-size:13px;color:#444;letter-spacing:0.075px;">Devon</span>
<span class="t" style="left:377.45px;top:268.50px;font-size:13px;color:#444;letter-spacing:0.068px;">Promotion details_Ver.docx</span>
<span class="t" style="left:641.45px;top:268.50px;font-size:13px;color:#444;letter-spacing:-0.100px;">Document</span>
<div class="r" style="left:783px;top:276px;width:6px;height:6px;background:#e0400a;border-radius:3px;"></div>
<span class="t" style="left:793.45px;top:268.50px;font-size:13px;color:#444;letter-spacing:-0.460px;">Secret</span>
<span class="t" style="left:867.65px;top:268.50px;font-size:13px;color:#444;letter-spacing:-0.620px;">13.4KB</span>
<span class="t" style="left:981.65px;top:268.50px;font-size:13px;color:#444;letter-spacing:0.058px;">Google Chrome</span>
<span class="t" style="left:1258.85px;top:268.50px;font-size:13px;color:#444;">2</span>
<span class="t" style="left:1273.25px;top:268.50px;font-size:13px;color:#444;letter-spacing:-0.090px;">09/29/2025 12:02:28 PM</span>
<div class="r" style="left:1px;top:293px;width:1447px;height:27px;background:#fafafa;"></div>
<span class="t" style="left:5.45px;top:295.50px;font-size:13px;color:#444;letter-spacing:-0.386px;">Shanghai</span>
<span class="t" style="left:93.45px;top:295.50px;font-size:13px;color:#444;letter-spacing:-0.358px;">SHA-DEV-DT-08</span>
<span class="t" style="left:232.45px;top:295.50px;font-size:13px;color:#444;letter-spacing:0.075px;">Devon</span>
<span class="t" style="left:377.45px;top:295.50px;font-size:13px;color:#444;letter-spacing:0.068px;">Promotion details_Ver.docx</span>
<span class="t" style="left:641.45px;top:295.50px;font-size:13px;color:#444;letter-spacing:-0.100px;">Document</span>
<div class="r" style="left:783px;top:303px;width:6px;height:6px;background:#e0400a;border-radius:3px;"></div>
<span class="t" style="left:793.45px;top:295.50px;font-size:13px;color:#444;letter-spacing:-0.460px;">Secret</span>
<span class="t" style="left:867.65px;top:295.50px;font-size:13px;color:#444;letter-spacing:-0.620px;">13.4KB</span>
<span class="t" style="left:981.65px;top:295.50px;font-size:13px;color:#444;letter-spacing:0.058px;">Google Chrome</span>
<span class="t" style="left:1258.85px;top:295.50px;font-size:13px;color:#444;">2</span>
<span class="t" style="left:1273.25px;top:295.50px;font-size:13px;color:#444;letter-spacing:-0.090px;">09/29/2025 12:02:28 PM</span>
<span class="t" style="left:5.45px;top:322.50px;font-size:13px;color:#444;letter-spacing:-0.386px;">Shanghai</span>
<span class="t" style="left:93.45px;top:322.50px;font-size:13px;color:#444;letter-spacing:-0.358px;">SHA-DEV-DT-08</span>
<span class="t" style="left:232.45px;top:322.50px;font-size:13px;color:#444;letter-spacing:0.075px;">Devon</span>
<span class="t" style="left:377.45px;top:322.50px;font-size:13px;color:#444;letter-spacing:-0.012px;">Promotion details_0929.docx</span>
<span class="t" style="left:641.45px;top:322.50px;font-size:13px;color:#444;letter-spacing:-0.100px;">Document</span>
<div class="r" style="left:783px;top:330px;width:6px;height:6px;background:#e0400a;border-radius:3px;"></div>
<span class="t" style="left:793.45px;top:322.50px;font-size:13px;color:#444;letter-spacing:-0.460px;">Secret</span>
<span class="t" style="left:867.65px;top:322.50px;font-size:13px;color:#444;letter-spacing:-0.620px;">13.4KB</span>
<span class="t" style="left:981.65px;top:322.50px;font-size:13px;color:#444;letter-spacing:0.058px;">Google Chrome</span>
<span class="t" style="left:1258.85px;top:322.50px;font-size:13px;color:#444;">0</span>
<span class="t" style="left:1273.25px;top:322.50px;font-size:13px;color:#444;letter-spacing:-0.090px;">09/29/2025 12:00:29 PM</span>
<div class="r" style="left:1px;top:347px;width:1447px;height:27px;background:#fafafa;"></div>
<span class="t" style="left:5.45px;top:349.50px;font-size:13px;color:#444;letter-spacing:-0.386px;">Shanghai</span>
<span class="t" style="left:93.45px;top:349.50px;font-size:13px;color:#444;letter-spacing:-0.358px;">SHA-DEV-DT-08</span>
<span class="t" style="left:232.45px;top:349.50px;font-size:13px;color:#444;letter-spacing:0.075px;">Devon</span>
<span class="t" style="left:377.45px;top:349.50px;font-size:13px;color:#444;letter-spacing:-0.281px;">Foreign_Candidate_List.xlsx</span>
<span class="t" style="left:641.45px;top:349.50px;font-size:13px;color:#444;letter-spacing:-0.100px;">Document</span>
<div class="r" style="left:783px;top:357px;width:6px;height:6px;background:#e0400a;border-radius:3px;"></div>
<span class="t" style="left:793.45px;top:349.50px;font-size:13px;color:#444;letter-spacing:-0.460px;">Secret</span>
<span class="t" style="left:868.65px;top:349.50px;font-size:13px;color:#444;letter-spacing:-0.775px;">5.8KB</span>
<span class="t" style="left:981.65px;top:349.50px;font-size:13px;color:#444;letter-spacing:0.058px;">Google Chrome</span>
<span class="t" style="left:1258.85px;top:349.50px;font-size:13px;color:#444;">0</span>
<span class="t" style="left:1273.25px;top:349.50px;font-size:13px;color:#444;letter-spacing:0.048px;">09/29/2025 11:59:25 AM</span>
<span class="t" style="left:5.45px;top:376.50px;font-size:13px;color:#444;letter-spacing:-0.386px;">Shanghai</span>
<span class="t" style="left:93.45px;top:376.50px;font-size:13px;color:#444;letter-spacing:-0.358px;">SHA-DEV-DT-08</span>
<span class="t" style="left:232.45px;top:376.50px;font-size:13px;color:#444;letter-spacing:0.075px;">Devon</span>
<span class="t" style="left:377.45px;top:376.50px;font-size:13px;color:#444;letter-spacing:-0.281px;">Foreign_Candidate_List.xlsx</span>
<span class="t" style="left:641.45px;top:376.50px;font-size:13px;color:#444;letter-spacing:-0.100px;">Document</span>
<div class="r" style="left:783px;top:384px;width:6px;height:6px;background:#e0400a;border-radius:3px;"></div>
<span class="t" style="left:793.45px;top:376.50px;font-size:13px;color:#444;letter-spacing:-0.460px;">Secret</span>
<span class="t" style="left:868.65px;top:376.50px;font-size:13px;color:#444;letter-spacing:-0.775px;">5.8KB</span>
<span class="t" style="left:981.65px;top:376.50px;font-size:13px;color:#444;letter-spacing:0.058px;">Google Chrome</span>
<span class="t" style="left:1258.85px;top:376.50px;font-size:13px;color:#444;">0</span>
<span class="t" style="left:1273.25px;top:376.50px;font-size:13px;color:#444;letter-spacing:0.048px;">09/29/2025 11:59:25 AM</span>
<div class="r" style="left:1px;top:401px;width:1447px;height:27px;background:#fafafa;"></div>
<span class="t" style="left:5.45px;top:403.50px;font-size:13px;color:#444;letter-spacing:-0.386px;">Shanghai</span>
<span class="t" style="left:93.45px;top:403.50px;font-size:13px;color:#444;letter-spacing:-0.358px;">SHA-DEV-DT-08</span>
<span class="t" style="left:232.45px;top:403.50px;font-size:13px;color:#444;letter-spacing:0.075px;">Devon</span>
<span class="t" style="left:378.45px;top:403.50px;font-size:13px;color:#444;letter-spacing:0.121px;">demo_Normal.pdf</span>
<span class="t" style="left:641.45px;top:403.50px;font-size:13px;color:#444;letter-spacing:-0.100px;">Document</span>
<div class="r" style="left:783px;top:411px;width:6px;height:6px;background:#e0400a;border-radius:3px;"></div>
<span class="t" style="left:793.45px;top:403.50px;font-size:13px;color:#444;letter-spacing:-0.460px;">Secret</span>
<span class="t" style="left:868.65px;top:403.50px;font-size:13px;color:#444;letter-spacing:-0.860px;">51.6KB</span>
<span class="t" style="left:981.65px;top:403.50px;font-size:13px;color:#444;letter-spacing:0.058px;">Google Chrome</span>
<span class="t" style="left:1258.85px;top:403.50px;font-size:13px;color:#444;">0</span>
<span class="t" style="left:1273.25px;top:403.50px;font-size:13px;color:#444;letter-spacing:0.048px;">09/29/2025 11:59:12 AM</span>
<span class="t" style="left:5.45px;top:430.50px;font-size:13px;color:#444;letter-spacing:-0.386px;">Shanghai</span>
<span class="t" style="left:93.45px;top:430.50px;font-size:13px;color:#444;letter-spacing:-0.358px;">SHA-DEV-DT-08</span>
<span class="t" style="left:232.45px;top:430.50px;font-size:13px;color:#444;letter-spacing:0.075px;">Devon</span>
<span class="t" style="left:378.45px;top:430.50px;font-size:13px;color:#444;letter-spacing:0.121px;">demo_Normal.pdf</span>
<span class="t" style="left:641.45px;top:430.50px;font-size:13px;color:#444;letter-spacing:-0.100px;">Document</span>
<div class="r" style="left:783px;top:438px;width:6px;height:6px;background:#e0400a;border-radius:3px;"></div>
<span class="t" style="left:793.45px;top:430.50px;font-size:13px;color:#444;letter-spacing:-0.460px;">Secret</span>
<span class="t" style="left:868.65px;top:430.50px;font-size:13px;color:#444;letter-spacing:-0.860px;">51.6KB</span>
<span class="t" style="left:981.65px;top:430.50px;font-size:13px;color:#444;letter-spacing:0.058px;">Google Chrome</span>
<span class="t" style="left:1258.85px;top:430.50px;font-size:13px;color:#444;">0</span>
<span class="t" style="left:1273.25px;top:430.50px;font-size:13px;color:#444;letter-spacing:0.048px;">09/29/2025 11:59:12 AM</span>
<div class="r" style="left:1px;top:455px;width:1447px;height:27px;background:#fafafa;"></div>
<span class="t" style="left:5.45px;top:457.50px;font-size:13px;color:#444;letter-spacing:-0.386px;">Shanghai</span>
<span class="t" style="left:93.45px;top:457.50px;font-size:13px;color:#444;letter-spacing:-0.358px;">SHA-DEV-DT-08</span>
<span class="t" style="left:232.45px;top:457.50px;font-size:13px;color:#444;letter-spacing:0.075px;">Devon</span>
<span class="t" style="left:377.45px;top:457.50px;font-size:13px;color:#444;letter-spacing:-0.281px;">Foreign_Candidate_List.xlsx</span>
<span class="t" style="left:641.45px;top:457.50px;font-size:13px;color:#444;letter-spacing:-0.100px;">Document</span>
<div class="r" style="left:783px;top:465px;width:6px;height:6px;background:#e0400a;border-radius:3px;"></div>
<span class="t" style="left:793.45px;top:457.50px;font-size:13px;color:#444;letter-spacing:-0.460px;">Secret</span>
<span class="t" style="left:868.65px;top:457.50px;font-size:13px;color:#444;letter-spacing:-0.775px;">5.8KB</span>
<span class="t" style="left:981.65px;top:457.50px;font-size:13px;color:#444;letter-spacing:0.058px;">Google Chrome</span>
<span class="t" style="left:1258.85px;top:457.50px;font-size:13px;color:#444;">0</span>
<span class="t" style="left:1273.25px;top:457.50px;font-size:13px;color:#444;letter-spacing:0.048px;">09/29/2025 11:47:38 AM</span>
<span class="t" style="left:5.45px;top:484.50px;font-size:13px;color:#444;letter-spacing:-0.386px;">Shanghai</span>
<span class="t" style="left:93.45px;top:484.50px;font-size:13px;color:#444;letter-spacing:-0.358px;">SHA-DEV-DT-08</span>
<span class="t" style="left:232.45px;top:484.50px;font-size:13px;color:#444;letter-spacing:0.075px;">Devon</span>
<span class="t" style="left:378.45px;top:484.50px;font-size:13px;color:#444;letter-spacing:-0.332px;">Orion_Product_Spec_v4.6.0.pdf</span>
<span class="t" style="left:641.45px;top:484.50px;font-size:13px;color:#444;letter-spacing:-0.100px;">Document</span>
<div class="r" style="left:783px;top:492px;width:6px;height:6px;background:#e0400a;border-radius:3px;"></div>
<span class="t" style="left:793.45px;top:484.50px;font-size:13px;color:#444;letter-spacing:-0.460px;">Secret</span>
<span class="t" style="left:867.65px;top:484.50px;font-size:13px;color:#444;letter-spacing:-0.375px;">1.4MB</span>
<span class="t" style="left:981.65px;top:484.50px;font-size:13px;color:#444;letter-spacing:0.110px;">Thunderbird</span>
<span class="t" style="left:1258.85px;top:484.50px;font-size:13px;color:#444;">0</span>
<span class="t" style="left:1273.25px;top:484.50px;font-size:13px;color:#444;letter-spacing:0.048px;">09/29/2025 11:10:03 AM</span>
<div class="r" style="left:1px;top:509px;width:1447px;height:27px;background:#fafafa;"></div>
<span class="t" style="left:5.45px;top:511.50px;font-size:13px;color:#444;letter-spacing:-0.386px;">Shanghai</span>
<span class="t" style="left:93.45px;top:511.50px;font-size:13px;color:#444;letter-spacing:-0.358px;">SHA-DEV-DT-08</span>
<span class="t" style="left:232.45px;top:511.50px;font-size:13px;color:#444;letter-spacing:0.075px;">Devon</span>
<span class="t" style="left:378.45px;top:511.50px;font-size:13px;color:#444;letter-spacing:-0.332px;">Orion_Product_Spec_v4.6.0.pdf</span>
<span class="t" style="left:641.45px;top:511.50px;font-size:13px;color:#444;letter-spacing:-0.100px;">Document</span>
<div class="r" style="left:783px;top:519px;width:6px;height:6px;background:#e0400a;border-radius:3px;"></div>
<span class="t" style="left:793.45px;top:511.50px;font-size:13px;color:#444;letter-spacing:-0.460px;">Secret</span>
<span class="t" style="left:867.65px;top:511.50px;font-size:13px;color:#444;letter-spacing:-0.375px;">1.4MB</span>
<span class="t" style="left:981.65px;top:511.50px;font-size:13px;color:#444;letter-spacing:0.110px;">Thunderbird</span>
<span class="t" style="left:1258.85px;top:511.50px;font-size:13px;color:#444;">0</span>
<span class="t" style="left:1273.25px;top:511.50px;font-size:13px;color:#444;letter-spacing:0.048px;">09/29/2025 11:10:03 AM</span>
<span class="t" style="left:5.45px;top:538.50px;font-size:13px;color:#444;letter-spacing:-0.386px;">Shanghai</span>
<span class="t" style="left:93.45px;top:538.50px;font-size:13px;color:#444;letter-spacing:-0.358px;">SHA-DEV-DT-08</span>
<span class="t" style="left:232.45px;top:538.50px;font-size:13px;color:#444;letter-spacing:0.075px;">Devon</span>
<span class="t" style="left:378.45px;top:538.50px;font-size:13px;color:#444;letter-spacing:-0.332px;">Orion_Product_Spec_v4.6.0.pdf</span>
<span class="t" style="left:641.45px;top:538.50px;font-size:13px;color:#444;letter-spacing:-0.100px;">Document</span>
<div class="r" style="left:783px;top:546px;width:6px;height:6px;background:#e0400a;border-radius:3px;"></div>
<span class="t" style="left:793.45px;top:538.50px;font-size:13px;color:#444;letter-spacing:-0.460px;">Secret</span>
<span class="t" style="left:867.65px;top:538.50px;font-size:13px;color:#444;letter-spacing:-0.375px;">1.4MB</span>
<span class="t" style="left:981.65px;top:538.50px;font-size:13px;color:#444;letter-spacing:0.110px;">Thunderbird</span>
<span class="t" style="left:1258.85px;top:538.50px;font-size:13px;color:#444;">0</span>
<span class="t" style="left:1273.25px;top:538.50px;font-size:13px;color:#444;letter-spacing:0.048px;">09/29/2025 11:08:30 AM</span>
<div class="r" style="left:1px;top:563px;width:1447px;height:27px;background:#fafafa;"></div>
<span class="t" style="left:5.45px;top:565.50px;font-size:13px;color:#444;letter-spacing:-0.386px;">Shanghai</span>
<span class="t" style="left:93.45px;top:565.50px;font-size:13px;color:#444;letter-spacing:-0.358px;">SHA-DEV-DT-08</span>
<span class="t" style="left:232.45px;top:565.50px;font-size:13px;color:#444;letter-spacing:0.075px;">Devon</span>
<span class="t" style="left:378.45px;top:565.50px;font-size:13px;color:#444;letter-spacing:-0.332px;">Orion_Product_Spec_v4.6.0.pdf</span>
<span class="t" style="left:641.45px;top:565.50px;font-size:13px;color:#444;letter-spacing:-0.100px;">Document</span>
<div class="r" style="left:783px;top:573px;width:6px;height:6px;background:#e0400a;border-radius:3px;"></div>
<span class="t" style="left:793.45px;top:565.50px;font-size:13px;color:#444;letter-spacing:-0.460px;">Secret</span>
<span class="t" style="left:867.65px;top:565.50px;font-size:13px;color:#444;letter-spacing:-0.375px;">1.4MB</span>
<span class="t" style="left:981.65px;top:565.50px;font-size:13px;color:#444;letter-spacing:0.110px;">Thunderbird</span>
<span class="t" style="left:1258.85px;top:565.50px;font-size:13px;color:#444;">0</span>
<span class="t" style="left:1273.25px;top:565.50px;font-size:13px;color:#444;letter-spacing:0.048px;">09/29/2025 11:08:30 AM</span>
<span class="t" style="left:5.45px;top:592.50px;font-size:13px;color:#444;letter-spacing:-0.386px;">Shanghai</span>
<span class="t" style="left:93.45px;top:592.50px;font-size:13px;color:#444;letter-spacing:-0.358px;">SHA-DEV-DT-08</span>
<span class="t" style="left:232.45px;top:592.50px;font-size:13px;color:#444;letter-spacing:0.075px;">Devon</span>
<span class="t" style="left:377.45px;top:592.50px;font-size:13px;color:#444;letter-spacing:-0.012px;">Promotion details_0929.docx</span>
<span class="t" style="left:641.45px;top:592.50px;font-size:13px;color:#444;letter-spacing:-0.100px;">Document</span>
<div class="r" style="left:783px;top:600px;width:6px;height:6px;background:#e0400a;border-radius:3px;"></div>
<span class="t" style="left:793.45px;top:592.50px;font-size:13px;color:#444;letter-spacing:-0.460px;">Secret</span>
<span class="t" style="left:867.65px;top:592.50px;font-size:13px;color:#444;letter-spacing:-0.620px;">13.4KB</span>
<span class="t" style="left:980.65px;top:592.50px;font-size:13px;color:#444;letter-spacing:0.223px;">Microsoft Edge</span>
<span class="t" style="left:1258.85px;top:592.50px;font-size:13px;color:#444;">2</span>
<span class="t" style="left:1273.25px;top:592.50px;font-size:13px;color:#444;">09/29/2025 10:03:57 AM</span>
<div class="r" style="left:1px;top:617px;width:1447px;height:27px;background:#fafafa;"></div>
<span class="t" style="left:5.45px;top:619.50px;font-size:13px;color:#444;letter-spacing:-0.386px;">Shanghai</span>
<span class="t" style="left:93.45px;top:619.50px;font-size:13px;color:#444;letter-spacing:-0.358px;">SHA-DEV-DT-08</span>
<span class="t" style="left:232.45px;top:619.50px;font-size:13px;color:#444;letter-spacing:0.075px;">Devon</span>
<span class="t" style="left:377.45px;top:619.50px;font-size:13px;color:#444;letter-spacing:-0.012px;">Promotion details_0929.docx</span>
<span class="t" style="left:641.45px;top:619.50px;font-size:13px;color:#444;letter-spacing:-0.100px;">Document</span>
<div class="r" style="left:783px;top:627px;width:6px;height:6px;background:#e0400a;border-radius:3px;"></div>
<span class="t" style="left:793.45px;top:619.50px;font-size:13px;color:#444;letter-spacing:-0.460px;">Secret</span>
<span class="t" style="left:867.65px;top:619.50px;font-size:13px;color:#444;letter-spacing:-0.620px;">13.4KB</span>
<span class="t" style="left:980.65px;top:619.50px;font-size:13px;color:#444;letter-spacing:0.223px;">Microsoft Edge</span>
<span class="t" style="left:1258.85px;top:619.50px;font-size:13px;color:#444;">2</span>
<span class="t" style="left:1273.25px;top:619.50px;font-size:13px;color:#444;">09/29/2025 10:03:57 AM</span>
<span class="t" style="left:5.45px;top:646.50px;font-size:13px;color:#444;letter-spacing:-0.386px;">Shanghai</span>
<span class="t" style="left:93.45px;top:646.50px;font-size:13px;color:#444;letter-spacing:-0.358px;">SHA-DEV-DT-08</span>
<span class="t" style="left:232.45px;top:646.50px;font-size:13px;color:#444;letter-spacing:0.075px;">Devon</span>
<span class="t" style="left:378.45px;top:646.50px;font-size:13px;color:#444;letter-spacing:-0.064px;">img_Website.png</span>
<span class="t" style="left:642.45px;top:646.50px;font-size:13px;color:#444;letter-spacing:-0.243px;">Graphics</span>
<div class="r" style="left:783px;top:654px;width:6px;height:6px;background:#e0400a;border-radius:3px;"></div>
<span class="t" style="left:793.45px;top:646.50px;font-size:13px;color:#444;letter-spacing:-0.460px;">Secret</span>
<span class="t" style="left:868.65px;top:646.50px;font-size:13px;color:#444;letter-spacing:-0.650px;">626.5KB</span>
<span class="t" style="left:980.65px;top:646.50px;font-size:13px;color:#444;letter-spacing:0.223px;">Microsoft Edge</span>
<span class="t" style="left:1258.85px;top:646.50px;font-size:13px;color:#444;">0</span>
<span class="t" style="left:1273.25px;top:646.50px;font-size:13px;color:#444;">09/29/2025 10:02:32 AM</span>
<div class="r" style="left:1px;top:671px;width:1447px;height:27px;background:#fafafa;"></div>
<span class="t" style="left:5.45px;top:673.50px;font-size:13px;color:#444;letter-spacing:-0.386px;">Shanghai</span>
<span class="t" style="left:93.45px;top:673.50px;font-size:13px;color:#444;letter-spacing:-0.358px;">SHA-DEV-DT-08</span>
<span class="t" style="left:232.45px;top:673.50px;font-size:13px;color:#444;letter-spacing:0.075px;">Devon</span>
<span class="t" style="left:378.45px;top:673.50px;font-size:13px;color:#444;letter-spacing:-0.064px;">img_Website.png</span>
<span class="t" style="left:642.45px;top:673.50px;font-size:13px;color:#444;letter-spacing:-0.243px;">Graphics</span>
<div class="r" style="left:783px;top:681px;width:6px;height:6px;background:#e0400a;border-radius:3px;"></div>
<span class="t" style="left:793.45px;top:673.50px;font-size:13px;color:#444;letter-spacing:-0.460px;">Secret</span>
<span class="t" style="left:868.65px;top:673.50px;font-size:13px;color:#444;letter-spacing:-0.650px;">626.5KB</span>
<span class="t" style="left:980.65px;top:673.50px;font-size:13px;color:#444;letter-spacing:0.223px;">Microsoft Edge</span>
<span class="t" style="left:1258.85px;top:673.50px;font-size:13px;color:#444;">0</span>
<span class="t" style="left:1273.25px;top:673.50px;font-size:13px;color:#444;">09/29/2025 10:02:32 AM</span>
<span class="t" style="left:5.45px;top:700.50px;font-size:13px;color:#444;letter-spacing:-0.386px;">Shanghai</span>
<span class="t" style="left:93.45px;top:700.50px;font-size:13px;color:#444;letter-spacing:-0.358px;">SHA-DEV-DT-08</span>
<span class="t" style="left:232.45px;top:700.50px;font-size:13px;color:#444;letter-spacing:0.075px;">Devon</span>
<span class="t" style="left:378.45px;top:700.50px;font-size:13px;color:#444;letter-spacing:-0.064px;">img_Website.png</span>
<span class="t" style="left:642.45px;top:700.50px;font-size:13px;color:#444;letter-spacing:-0.243px;">Graphics</span>
<div class="r" style="left:783px;top:708px;width:6px;height:6px;background:#e0400a;border-radius:3px;"></div>
<span class="t" style="left:793.45px;top:700.50px;font-size:13px;color:#444;letter-spacing:-0.460px;">Secret</span>
<span class="t" style="left:868.65px;top:700.50px;font-size:13px;color:#444;letter-spacing:-0.650px;">626.5KB</span>
<span class="t" style="left:980.65px;top:700.50px;font-size:13px;color:#444;letter-spacing:0.223px;">Microsoft Edge</span>
<span class="t" style="left:1258.85px;top:700.50px;font-size:13px;color:#444;">0</span>
<span class="t" style="left:1273.25px;top:700.50px;font-size:13px;color:#444;">09/29/2025 09:57:41 AM</span>
<div class="r" style="left:1px;top:725px;width:1447px;height:27px;background:#fafafa;"></div>
<span class="t" style="left:4.45px;top:727.50px;font-size:13px;color:#444;letter-spacing:0.386px;">New York</span>
<span class="t" style="left:92.45px;top:727.50px;font-size:13px;color:#444;letter-spacing:0.100px;">NY-IT-DT-102</span>
<span class="t" style="left:232.45px;top:727.50px;font-size:13px;color:#444;letter-spacing:-0.900px;">Lucy</span>
<span class="t" style="left:377.45px;top:727.50px;font-size:13px;color:#444;letter-spacing:-0.264px;">ISO_Cert.jpg</span>
<span class="t" style="left:642.45px;top:727.50px;font-size:13px;color:#444;letter-spacing:-0.243px;">Graphics</span>
<div class="r" style="left:783px;top:735px;width:6px;height:6px;background:#e0400a;border-radius:3px;"></div>
<span class="t" style="left:793.45px;top:727.50px;font-size:13px;color:#444;letter-spacing:-0.460px;">Secret</span>
<span class="t" style="left:868.65px;top:727.50px;font-size:13px;color:#444;letter-spacing:-0.860px;">90.4KB</span>
<span class="t" style="left:980.65px;top:727.50px;font-size:13px;color:#444;letter-spacing:0.050px;">Move Storage Device</span>
<span class="t" style="left:1258.85px;top:727.50px;font-size:13px;color:#444;">0</span>
<span class="t" style="left:1273.25px;top:727.50px;font-size:13px;color:#444;letter-spacing:-0.090px;">09/28/2025 03:33:35 PM</span>
<span class="t" style="left:4.45px;top:754.50px;font-size:13px;color:#444;letter-spacing:0.386px;">New York</span>
<span class="t" style="left:92.45px;top:754.50px;font-size:13px;color:#444;letter-spacing:0.100px;">NY-IT-DT-102</span>
<span class="t" style="left:232.45px;top:754.50px;font-size:13px;color:#444;letter-spacing:-0.900px;">Lucy</span>
<span class="t" style="left:378.45px;top:754.50px;font-size:13px;color:#444;letter-spacing:-0.217px;">img_Website_029.png</span>
<span class="t" style="left:642.45px;top:754.50px;font-size:13px;color:#444;letter-spacing:-0.243px;">Graphics</span>
<div class="r" style="left:783px;top:762px;width:6px;height:6px;background:#e0400a;border-radius:3px;"></div>
<span class="t" style="left:793.45px;top:754.50px;font-size:13px;color:#444;letter-spacing:-0.460px;">Secret</span>
<span class="t" style="left:868.65px;top:754.50px;font-size:13px;color:#444;letter-spacing:-0.650px;">626.5KB</span>
<span class="t" style="left:980.65px;top:754.50px;font-size:13px;color:#444;letter-spacing:0.050px;">Move Storage Device</span>
<span class="t" style="left:1258.85px;top:754.50px;font-size:13px;color:#444;">0</span>
<span class="t" style="left:1273.25px;top:754.50px;font-size:13px;color:#444;letter-spacing:-0.090px;">09/28/2025 03:31:07 PM</span>
<div class="r" style="left:1px;top:779px;width:1447px;height:27px;background:#fafafa;"></div>
<span class="t" style="left:5.45px;top:781.50px;font-size:13px;color:#444;letter-spacing:-0.386px;">Shanghai</span>
<span class="t" style="left:93.45px;top:781.50px;font-size:13px;color:#444;letter-spacing:-0.027px;">CN-MKT-DT-37</span>
<span class="t" style="left:233.45px;top:781.50px;font-size:13px;color:#444;letter-spacing:-1.033px;">Anna</span>
<span class="t" style="left:377.45px;top:781.50px;font-size:13px;color:#444;letter-spacing:0.129px;">Promotion details.docx</span>
<span class="t" style="left:641.45px;top:781.50px;font-size:13px;color:#444;letter-spacing:-0.100px;">Document</span>
<div class="r" style="left:783px;top:789px;width:6px;height:6px;background:#e0400a;border-radius:3px;"></div>
<span class="t" style="left:793.45px;top:781.50px;font-size:13px;color:#444;letter-spacing:-0.460px;">Secret</span>
<span class="t" style="left:867.65px;top:781.50px;font-size:13px;color:#444;letter-spacing:-0.620px;">13.4KB</span>
<span class="t" style="left:981.65px;top:781.50px;font-size:13px;color:#444;letter-spacing:0.110px;">Thunderbird</span>
<span class="t" style="left:1258.85px;top:781.50px;font-size:13px;color:#444;">2</span>
<span class="t" style="left:1273.25px;top:781.50px;font-size:13px;color:#444;letter-spacing:-0.090px;">09/28/2025 01:56:43 PM</span>
<span class="t" style="left:5.45px;top:808.50px;font-size:13px;color:#444;letter-spacing:-0.386px;">Shanghai</span>
<span class="t" style="left:93.45px;top:808.50px;font-size:13px;color:#444;letter-spacing:-0.027px;">CN-MKT-DT-37</span>
<span class="t" style="left:233.45px;top:808.50px;font-size:13px;color:#444;letter-spacing:-1.033px;">Anna</span>
<span class="t" style="left:377.45px;top:808.50px;font-size:13px;color:#444;letter-spacing:-0.174px;">Purchase _Order.xlsx</span>
<span class="t" style="left:641.45px;top:808.50px;font-size:13px;color:#444;letter-spacing:-0.100px;">Document</span>
<div class="r" style="left:783px;top:816px;width:6px;height:6px;background:#e0400a;border-radius:3px;"></div>
<span class="t" style="left:793.45px;top:808.50px;font-size:13px;color:#444;letter-spacing:-0.460px;">Secret</span>
<span class="t" style="left:868.65px;top:808.50px;font-size:13px;color:#444;letter-spacing:-0.775px;">9.1KB</span>
<span class="t" style="left:981.65px;top:808.50px;font-size:13px;color:#444;letter-spacing:0.110px;">Thunderbird</span>
<span class="t" style="left:1258.85px;top:808.50px;font-size:13px;color:#444;">0</span>
<span class="t" style="left:1273.25px;top:808.50px;font-size:13px;color:#444;letter-spacing:0.048px;">09/28/2025 11:14:29 AM</span>
<div class="r" style="left:1px;top:833px;width:1447px;height:21px;background:#fafafa;"></div>
<span class="t" style="left:5.45px;top:835.50px;font-size:13px;color:#444;letter-spacing:-0.386px;">Shanghai</span>
<span class="t" style="left:93.45px;top:835.50px;font-size:13px;color:#444;letter-spacing:-0.027px;">CN-MKT-DT-37</span>
<span class="t" style="left:233.45px;top:835.50px;font-size:13px;color:#444;letter-spacing:-1.033px;">Anna</span>
<span class="t" style="left:377.45px;top:835.50px;font-size:13px;color:#444;letter-spacing:0.050px;">IDcard_INfo.txt</span>
<span class="t" style="left:642.45px;top:835.50px;font-size:13px;color:#444;letter-spacing:-0.233px;">Text</span>
<div class="r" style="left:783px;top:843px;width:6px;height:6px;background:#e0400a;border-radius:3px;"></div>
<span class="t" style="left:793.45px;top:835.50px;font-size:13px;color:#444;letter-spacing:-0.460px;">Secret</span>
<span class="t" style="left:868.65px;top:835.50px;font-size:13px;color:#444;letter-spacing:-1.150px;">58B</span>
<span class="t" style="left:980.65px;top:835.50px;font-size:13px;color:#444;letter-spacing:0.050px;">Move Storage Device</span>
<span class="t" style="left:1258.85px;top:835.50px;font-size:13px;color:#444;">2</span>
<span class="t" style="left:1273.25px;top:835.50px;font-size:13px;color:#444;">09/28/2025 10:22:14 AM</span>
<svg class="r" style="left:353px;top:271px" width="17" height="16" viewBox="0 0 17 16"><circle cx="8.1" cy="8" r="6.85" fill="none" stroke="#cb4226" stroke-width="2.3"/><path d="M12.6 3.5 L3.6 12.5" stroke="#cb4226" stroke-width="2.3"/></svg>
<svg class="r" style="left:957px;top:271px" width="16" height="16" viewBox="0 0 16 16"><circle cx="8" cy="8" r="8" fill="#fbc116"/><path d="M1.07 4.00 A8.0 8.0 0 0 1 14.93 4.00 L8.00 4.10 A3.9 3.9 0 0 0 4.62 9.95 Z" fill="#e33b2e"/><path d="M8.00 16.00 A8.0 8.0 0 0 1 1.07 4.00 L4.62 9.95 A3.9 3.9 0 0 0 11.38 9.95 Z" fill="#2da94f"/><path d="M14.93 4.00 A8.0 8.0 0 0 1 8.00 16.00 L11.38 9.95 A3.9 3.9 0 0 0 8.00 4.10 Z" fill="#fbc116"/><circle cx="8" cy="8" r="3.9" fill="#fff"/><circle cx="8" cy="8" r="3.1" fill="#2f7bf0"/></svg>
<svg class="r" style="left:353px;top:298px" width="17" height="16" viewBox="0 0 17 16"><circle cx="8.1" cy="8" r="6.85" fill="none" stroke="#cb4226" stroke-width="2.3"/><path d="M12.6 3.5 L3.6 12.5" stroke="#cb4226" stroke-width="2.3"/></svg>
<svg class="r" style="left:957px;top:298px" width="16" height="16" viewBox="0 0 16 16"><circle cx="8" cy="8" r="8" fill="#fbc116"/><path d="M1.07 4.00 A8.0 8.0 0 0 1 14.93 4.00 L8.00 4.10 A3.9 3.9 0 0 0 4.62 9.95 Z" fill="#e33b2e"/><path d="M8.00 16.00 A8.0 8.0 0 0 1 1.07 4.00 L4.62 9.95 A3.9 3.9 0 0 0 11.38 9.95 Z" fill="#2da94f"/><path d="M14.93 4.00 A8.0 8.0 0 0 1 8.00 16.00 L11.38 9.95 A3.9 3.9 0 0 0 8.00 4.10 Z" fill="#fbc116"/><circle cx="8" cy="8" r="3.9" fill="#fff"/><circle cx="8" cy="8" r="3.1" fill="#2f7bf0"/></svg>
<svg class="r" style="left:353px;top:325px" width="17" height="16" viewBox="0 0 17 16"><circle cx="8.1" cy="8" r="6.85" fill="none" stroke="#cb4226" stroke-width="2.3"/><path d="M12.6 3.5 L3.6 12.5" stroke="#cb4226" stroke-width="2.3"/></svg>
<svg class="r" style="left:957px;top:325px" width="16" height="16" viewBox="0 0 16 16"><circle cx="8" cy="8" r="8" fill="#fbc116"/><path d="M1.07 4.00 A8.0 8.0 0 0 1 14.93 4.00 L8.00 4.10 A3.9 3.9 0 0 0 4.62 9.95 Z" fill="#e33b2e"/><path d="M8.00 16.00 A8.0 8.0 0 0 1 1.07 4.00 L4.62 9.95 A3.9 3.9 0 0 0 11.38 9.95 Z" fill="#2da94f"/><path d="M14.93 4.00 A8.0 8.0 0 0 1 8.00 16.00 L11.38 9.95 A3.9 3.9 0 0 0 8.00 4.10 Z" fill="#fbc116"/><circle cx="8" cy="8" r="3.9" fill="#fff"/><circle cx="8" cy="8" r="3.1" fill="#2f7bf0"/></svg>
<svg class="r" style="left:353px;top:354px" width="17" height="13" viewBox="0 0 17 13"><path d="M6.1 .1 H9.7 L16.1 6.5 L9.7 12.9 H6.1 L11.1 8 H.1 V5 H11.1 Z" fill="#0b6fd8"/></svg>
<svg class="r" style="left:957px;top:352px" width="16" height="16" viewBox="0 0 16 16"><circle cx="8" cy="8" r="8" fill="#fbc116"/><path d="M1.07 4.00 A8.0 8.0 0 0 1 14.93 4.00 L8.00 4.10 A3.9 3.9 0 0 0 4.62 9.95 Z" fill="#e33b2e"/><path d="M8.00 16.00 A8.0 8.0 0 0 1 1.07 4.00 L4.62 9.95 A3.9 3.9 0 0 0 11.38 9.95 Z" fill="#2da94f"/><path d="M14.93 4.00 A8.0 8.0 0 0 1 8.00 16.00 L11.38 9.95 A3.9 3.9 0 0 0 8.00 4.10 Z" fill="#fbc116"/><circle cx="8" cy="8" r="3.9" fill="#fff"/><circle cx="8" cy="8" r="3.1" fill="#2f7bf0"/></svg>
<svg class="r" style="left:353px;top:381px" width="17" height="13" viewBox="0 0 17 13"><path d="M6.1 .1 H9.7 L16.1 6.5 L9.7 12.9 H6.1 L11.1 8 H.1 V5 H11.1 Z" fill="#0b6fd8"/></svg>
<svg class="r" style="left:957px;top:379px" width="16" height="16" viewBox="0 0 16 16"><circle cx="8" cy="8" r="8" fill="#fbc116"/><path d="M1.07 4.00 A8.0 8.0 0 0 1 14.93 4.00 L8.00 4.10 A3.9 3.9 0 0 0 4.62 9.95 Z" fill="#e33b2e"/><path d="M8.00 16.00 A8.0 8.0 0 0 1 1.07 4.00 L4.62 9.95 A3.9 3.9 0 0 0 11.38 9.95 Z" fill="#2da94f"/><path d="M14.93 4.00 A8.0 8.0 0 0 1 8.00 16.00 L11.38 9.95 A3.9 3.9 0 0 0 8.00 4.10 Z" fill="#fbc116"/><circle cx="8" cy="8" r="3.9" fill="#fff"/><circle cx="8" cy="8" r="3.1" fill="#2f7bf0"/></svg>
<svg class="r" style="left:353px;top:408px" width="17" height="13" viewBox="0 0 17 13"><path d="M6.1 .1 H9.7 L16.1 6.5 L9.7 12.9 H6.1 L11.1 8 H.1 V5 H11.1 Z" fill="#0b6fd8"/></svg>
<svg class="r" style="left:957px;top:406px" width="16" height="16" viewBox="0 0 16 16"><circle cx="8" cy="8" r="8" fill="#fbc116"/><path d="M1.07 4.00 A8.0 8.0 0 0 1 14.93 4.00 L8.00 4.10 A3.9 3.9 0 0 0 4.62 9.95 Z" fill="#e33b2e"/><path d="M8.00 16.00 A8.0 8.0 0 0 1 1.07 4.00 L4.62 9.95 A3.9 3.9 0 0 0 11.38 9.95 Z" fill="#2da94f"/><path d="M14.93 4.00 A8.0 8.0 0 0 1 8.00 16.00 L11.38 9.95 A3.9 3.9 0 0 0 8.00 4.10 Z" fill="#fbc116"/><circle cx="8" cy="8" r="3.9" fill="#fff"/><circle cx="8" cy="8" r="3.1" fill="#2f7bf0"/></svg>
<svg class="r" style="left:353px;top:435px" width="17" height="13" viewBox="0 0 17 13"><path d="M6.1 .1 H9.7 L16.1 6.5 L9.7 12.9 H6.1 L11.1 8 H.1 V5 H11.1 Z" fill="#0b6fd8"/></svg>
<svg class="r" style="left:957px;top:433px" width="16" height="16" viewBox="0 0 16 16"><circle cx="8" cy="8" r="8" fill="#fbc116"/><path d="M1.07 4.00 A8.0 8.0 0 0 1 14.93 4.00 L8.00 4.10 A3.9 3.9 0 0 0 4.62 9.95 Z" fill="#e33b2e"/><path d="M8.00 16.00 A8.0 8.0 0 0 1 1.07 4.00 L4.62 9.95 A3.9 3.9 0 0 0 11.38 9.95 Z" fill="#2da94f"/><path d="M14.93 4.00 A8.0 8.0 0 0 1 8.00 16.00 L11.38 9.95 A3.9 3.9 0 0 0 8.00 4.10 Z" fill="#fbc116"/><circle cx="8" cy="8" r="3.9" fill="#fff"/><circle cx="8" cy="8" r="3.1" fill="#2f7bf0"/></svg>
<svg class="r" style="left:353px;top:460px" width="17" height="16" viewBox="0 0 17 16"><circle cx="8.1" cy="8" r="6.85" fill="none" stroke="#cb4226" stroke-width="2.3"/><path d="M12.6 3.5 L3.6 12.5" stroke="#cb4226" stroke-width="2.3"/></svg>
<svg class="r" style="left:745px;top:459px" width="17" height="18" viewBox="0 0 17 18"><path d="M1.25 8.41 L8.96 2.70 A3.95 3.95 0 0 1 13.66 9.04 L5.03 15.43 A2.85 2.85 0 0 1 1.64 10.85 L9.39 5.12 A1.5 1.5 0 0 1 11.17 7.53 L5.07 12.05" fill="none" stroke="#5d6b84" stroke-width="1.15" stroke-linecap="round"/></svg>
<svg class="r" style="left:957px;top:460px" width="16" height="16" viewBox="0 0 16 16"><circle cx="8" cy="8" r="8" fill="#fbc116"/><path d="M1.07 4.00 A8.0 8.0 0 0 1 14.93 4.00 L8.00 4.10 A3.9 3.9 0 0 0 4.62 9.95 Z" fill="#e33b2e"/><path d="M8.00 16.00 A8.0 8.0 0 0 1 1.07 4.00 L4.62 9.95 A3.9 3.9 0 0 0 11.38 9.95 Z" fill="#2da94f"/><path d="M14.93 4.00 A8.0 8.0 0 0 1 8.00 16.00 L11.38 9.95 A3.9 3.9 0 0 0 8.00 4.10 Z" fill="#fbc116"/><circle cx="8" cy="8" r="3.9" fill="#fff"/><circle cx="8" cy="8" r="3.1" fill="#2f7bf0"/></svg>
<svg class="r" style="left:353px;top:489px" width="17" height="13" viewBox="0 0 17 13"><path d="M6.1 .1 H9.7 L16.1 6.5 L9.7 12.9 H6.1 L11.1 8 H.1 V5 H11.1 Z" fill="#0b6fd8"/></svg>
<svg class="r" style="left:745px;top:486px" width="17" height="18" viewBox="0 0 17 18"><path d="M1.25 8.41 L8.96 2.70 A3.95 3.95 0 0 1 13.66 9.04 L5.03 15.43 A2.85 2.85 0 0 1 1.64 10.85 L9.39 5.12 A1.5 1.5 0 0 1 11.17 7.53 L5.07 12.05" fill="none" stroke="#5d6b84" stroke-width="1.15" stroke-linecap="round"/></svg>
<svg class="r" style="left:957px;top:487px" width="17" height="17" viewBox="0 0 17 17"><defs><linearGradient id="tbg8" x1="0.9" y1="0" x2="0.3" y2="1"><stop offset="0" stop-color="#2487e6"/><stop offset=".55" stop-color="#1170d8"/><stop offset="1" stop-color="#0a56bd"/></linearGradient></defs>
<path d="M3.5 2.4 C4.2 3.6 4.8 4.6 5.3 5.4 C6 3 8.6 1.1 12 1.2 C13.2 1.2 14.4 1 15.1 .8 C14.9 1.7 14.6 2.2 14.2 2.7 C15.2 3 15.8 3.3 16 3.6 C15.6 4 15.2 4.2 14.9 4.3 C15.6 4.6 15.9 5 16 5.3 C15.7 5.4 15.5 5.4 15.3 5.4 C15.9 6.6 16.1 7.8 16 9 C15.7 13.1 12.4 16.1 8.2 16.1 C4 16.1 .6 13 .3 9 C.2 7.8 .3 6.6 .6 5.8 C1 6.4 1.3 6.8 1.7 7 C1.9 5.2 2.5 3.6 3.5 2.4 Z" fill="url(#tbg8)"/>
<path d="M5.1 5.6 L10.7 5.3 Q12.3 6 12.2 7.6 L11.7 10.6 Q10 12.4 8 12.7 Q5.6 11.6 4.5 9.6 Q4 7 5.1 5.6 Z" fill="#e3f1fe"/>
<path d="M5.4 8.6 L7.6 9.8 L10.6 8.4 M6.4 11 L8.6 11.9" fill="none" stroke="#b4dcf8" stroke-width=".9"/>
<path d="M6.4 4.6 C7.4 2.8 9.6 2.4 11.6 3.2 C10.4 3.6 9 4.2 8 5.2 C7.4 5.6 6.4 5.4 6.4 4.6 Z" fill="#1672da"/>
<circle cx="8.4" cy="3.5" r=".55" fill="#dff0ff"/>
<path d="M3.2 10.8 C5 13.4 8.8 14.2 12 12.2 C10 15 5 14.8 3.2 10.8 Z" fill="#0a4cac"/></svg>
<svg class="r" style="left:353px;top:516px" width="17" height="13" viewBox="0 0 17 13"><path d="M6.1 .1 H9.7 L16.1 6.5 L9.7 12.9 H6.1 L11.1 8 H.1 V5 H11.1 Z" fill="#0b6fd8"/></svg>
<svg class="r" style="left:745px;top:513px" width="17" height="18" viewBox="0 0 17 18"><path d="M1.25 8.41 L8.96 2.70 A3.95 3.95 0 0 1 13.66 9.04 L5.03 15.43 A2.85 2.85 0 0 1 1.64 10.85 L9.39 5.12 A1.5 1.5 0 0 1 11.17 7.53 L5.07 12.05" fill="none" stroke="#5d6b84" stroke-width="1.15" stroke-linecap="round"/></svg>
<svg class="r" style="left:957px;top:514px" width="17" height="17" viewBox="0 0 17 17"><defs><linearGradient id="tbg9" x1="0.9" y1="0" x2="0.3" y2="1"><stop offset="0" stop-color="#2487e6"/><stop offset=".55" stop-color="#1170d8"/><stop offset="1" stop-color="#0a56bd"/></linearGradient></defs>
<path d="M3.5 2.4 C4.2 3.6 4.8 4.6 5.3 5.4 C6 3 8.6 1.1 12 1.2 C13.2 1.2 14.4 1 15.1 .8 C14.9 1.7 14.6 2.2 14.2 2.7 C15.2 3 15.8 3.3 16 3.6 C15.6 4 15.2 4.2 14.9 4.3 C15.6 4.6 15.9 5 16 5.3 C15.7 5.4 15.5 5.4 15.3 5.4 C15.9 6.6 16.1 7.8 16 9 C15.7 13.1 12.4 16.1 8.2 16.1 C4 16.1 .6 13 .3 9 C.2 7.8 .3 6.6 .6 5.8 C1 6.4 1.3 6.8 1.7 7 C1.9 5.2 2.5 3.6 3.5 2.4 Z" fill="url(#tbg9)"/>
<path d="M5.1 5.6 L10.7 5.3 Q12.3 6 12.2 7.6 L11.7 10.6 Q10 12.4 8 12.7 Q5.6 11.6 4.5 9.6 Q4 7 5.1 5.6 Z" fill="#e3f1fe"/>
<path d="M5.4 8.6 L7.6 9.8 L10.6 8.4 M6.4 11 L8.6 11.9" fill="none" stroke="#b4dcf8" stroke-width=".9"/>
<path d="M6.4 4.6 C7.4 2.8 9.6 2.4 11.6 3.2 C10.4 3.6 9 4.2 8 5.2 C7.4 5.6 6.4 5.4 6.4 4.6 Z" fill="#1672da"/>
<circle cx="8.4" cy="3.5" r=".55" fill="#dff0ff"/>
<path d="M3.2 10.8 C5 13.4 8.8 14.2 12 12.2 C10 15 5 14.8 3.2 10.8 Z" fill="#0a4cac"/></svg>
<svg class="r" style="left:353px;top:543px" width="17" height="13" viewBox="0 0 17 13"><path d="M6.1 .1 H9.7 L16.1 6.5 L9.7 12.9 H6.1 L11.1 8 H.1 V5 H11.1 Z" fill="#0b6fd8"/></svg>
<svg class="r" style="left:745px;top:540px" width="17" height="18" viewBox="0 0 17 18"><path d="M1.25 8.41 L8.96 2.70 A3.95 3.95 0 0 1 13.66 9.04 L5.03 15.43 A2.85 2.85 0 0 1 1.64 10.85 L9.39 5.12 A1.5 1.5 0 0 1 11.17 7.53 L5.07 12.05" fill="none" stroke="#5d6b84" stroke-width="1.15" stroke-linecap="round"/></svg>
<svg class="r" style="left:957px;top:541px" width="17" height="17" viewBox="0 0 17 17"><defs><linearGradient id="tbg10" x1="0.9" y1="0" x2="0.3" y2="1"><stop offset="0" stop-color="#2487e6"/><stop offset=".55" stop-color="#1170d8"/><stop offset="1" stop-color="#0a56bd"/></linearGradient></defs>
<path d="M3.5 2.4 C4.2 3.6 4.8 4.6 5.3 5.4 C6 3 8.6 1.1 12 1.2 C13.2 1.2 14.4 1 15.1 .8 C14.9 1.7 14.6 2.2 14.2 2.7 C15.2 3 15.8 3.3 16 3.6 C15.6 4 15.2 4.2 14.9 4.3 C15.6 4.6 15.9 5 16 5.3 C15.7 5.4 15.5 5.4 15.3 5.4 C15.9 6.6 16.1 7.8 16 9 C15.7 13.1 12.4 16.1 8.2 16.1 C4 16.1 .6 13 .3 9 C.2 7.8 .3 6.6 .6 5.8 C1 6.4 1.3 6.8 1.7 7 C1.9 5.2 2.5 3.6 3.5 2.4 Z" fill="url(#tbg10)"/>
<path d="M5.1 5.6 L10.7 5.3 Q12.3 6 12.2 7.6 L11.7 10.6 Q10 12.4 8 12.7 Q5.6 11.6 4.5 9.6 Q4 7 5.1 5.6 Z" fill="#e3f1fe"/>
<path d="M5.4 8.6 L7.6 9.8 L10.6 8.4 M6.4 11 L8.6 11.9" fill="none" stroke="#b4dcf8" stroke-width=".9"/>
<path d="M6.4 4.6 C7.4 2.8 9.6 2.4 11.6 3.2 C10.4 3.6 9 4.2 8 5.2 C7.4 5.6 6.4 5.4 6.4 4.6 Z" fill="#1672da"/>
<circle cx="8.4" cy="3.5" r=".55" fill="#dff0ff"/>
<path d="M3.2 10.8 C5 13.4 8.8 14.2 12 12.2 C10 15 5 14.8 3.2 10.8 Z" fill="#0a4cac"/></svg>
<svg class="r" style="left:353px;top:570px" width="17" height="13" viewBox="0 0 17 13"><path d="M6.1 .1 H9.7 L16.1 6.5 L9.7 12.9 H6.1 L11.1 8 H.1 V5 H11.1 Z" fill="#0b6fd8"/></svg>
<svg class="r" style="left:745px;top:567px" width="17" height="18" viewBox="0 0 17 18"><path d="M1.25 8.41 L8.96 2.70 A3.95 3.95 0 0 1 13.66 9.04 L5.03 15.43 A2.85 2.85 0 0 1 1.64 10.85 L9.39 5.12 A1.5 1.5 0 0 1 11.17 7.53 L5.07 12.05" fill="none" stroke="#5d6b84" stroke-width="1.15" stroke-linecap="round"/></svg>
<svg class="r" style="left:957px;top:568px" width="17" height="17" viewBox="0 0 17 17"><defs><linearGradient id="tbg11" x1="0.9" y1="0" x2="0.3" y2="1"><stop offset="0" stop-color="#2487e6"/><stop offset=".55" stop-color="#1170d8"/><stop offset="1" stop-color="#0a56bd"/></linearGradient></defs>
<path d="M3.5 2.4 C4.2 3.6 4.8 4.6 5.3 5.4 C6 3 8.6 1.1 12 1.2 C13.2 1.2 14.4 1 15.1 .8 C14.9 1.7 14.6 2.2 14.2 2.7 C15.2 3 15.8 3.3 16 3.6 C15.6 4 15.2 4.2 14.9 4.3 C15.6 4.6 15.9 5 16 5.3 C15.7 5.4 15.5 5.4 15.3 5.4 C15.9 6.6 16.1 7.8 16 9 C15.7 13.1 12.4 16.1 8.2 16.1 C4 16.1 .6 13 .3 9 C.2 7.8 .3 6.6 .6 5.8 C1 6.4 1.3 6.8 1.7 7 C1.9 5.2 2.5 3.6 3.5 2.4 Z" fill="url(#tbg11)"/>
<path d="M5.1 5.6 L10.7 5.3 Q12.3 6 12.2 7.6 L11.7 10.6 Q10 12.4 8 12.7 Q5.6 11.6 4.5 9.6 Q4 7 5.1 5.6 Z" fill="#e3f1fe"/>
<path d="M5.4 8.6 L7.6 9.8 L10.6 8.4 M6.4 11 L8.6 11.9" fill="none" stroke="#b4dcf8" stroke-width=".9"/>
<path d="M6.4 4.6 C7.4 2.8 9.6 2.4 11.6 3.2 C10.4 3.6 9 4.2 8 5.2 C7.4 5.6 6.4 5.4 6.4 4.6 Z" fill="#1672da"/>
<circle cx="8.4" cy="3.5" r=".55" fill="#dff0ff"/>
<path d="M3.2 10.8 C5 13.4 8.8 14.2 12 12.2 C10 15 5 14.8 3.2 10.8 Z" fill="#0a4cac"/></svg>
<svg class="r" style="left:353px;top:597px" width="17" height="13" viewBox="0 0 17 13"><path d="M6.1 .1 H9.7 L16.1 6.5 L9.7 12.9 H6.1 L11.1 8 H.1 V5 H11.1 Z" fill="#0b6fd8"/></svg>
<svg class="r" style="left:745px;top:594px" width="17" height="18" viewBox="0 0 17 18"><path d="M1.25 8.41 L8.96 2.70 A3.95 3.95 0 0 1 13.66 9.04 L5.03 15.43 A2.85 2.85 0 0 1 1.64 10.85 L9.39 5.12 A1.5 1.5 0 0 1 11.17 7.53 L5.07 12.05" fill="none" stroke="#5d6b84" stroke-width="1.15" stroke-linecap="round"/></svg>
<svg class="r" style="left:957px;top:595px" width="17" height="17" viewBox="0 0 17 17"><defs><linearGradient id="ea12" x1="0" y1="0.2" x2="1" y2="0.3"><stop offset="0" stop-color="#1a8fe0"/><stop offset=".5" stop-color="#30c0cc"/><stop offset="1" stop-color="#6fdc4b"/></linearGradient>
<linearGradient id="eb12" x1="0" y1="0" x2="0.4" y2="1"><stop offset="0" stop-color="#1f8fe0"/><stop offset="1" stop-color="#0a5fc0"/></linearGradient></defs>
<circle cx="8.1" cy="8" r="8" fill="url(#ea12)"/>
<path d="M16.2 9 L16.3 15 L11 16.2 L9 14 Z" fill="#fff"/>
<path d="M.2 8.4 C.1 5.8 2.6 3.8 5.6 3.8 C7.6 3.8 8.9 4.6 9.5 5.8 C5 4.8 4 11 7 13.6 C8 14.6 9.4 15.4 11 15.8 C5.4 17.4 .4 13.6 .2 8.4 Z" fill="url(#eb12)"/>
<path d="M6.2 6.6 C5.8 8.2 5.9 10 7 11.6 C9 14.4 13 14.2 15 11.4 C15.3 10.9 14.8 10.8 14.5 11 C12.8 12 10.6 11.6 9.6 10 C9 9 9 7.8 9.6 6.8 C8.6 5.8 7 5.6 6.2 6.6 Z" fill="#fff"/>
<path d="M5.5 7 C4.6 9.4 5.4 12 7.4 13.8 C9.8 15.8 13.4 15.2 15.3 12.2 C15.6 11.7 15.2 11.4 14.8 11.6 C12.4 13.2 9.4 12.6 7.8 10.4 C7 9.2 6.8 7.8 7.2 6.4 C6.5 6.2 5.8 6.4 5.5 7 Z" fill="#0c4a9c"/></svg>
<svg class="r" style="left:353px;top:624px" width="17" height="13" viewBox="0 0 17 13"><path d="M6.1 .1 H9.7 L16.1 6.5 L9.7 12.9 H6.1 L11.1 8 H.1 V5 H11.1 Z" fill="#0b6fd8"/></svg>
<svg class="r" style="left:745px;top:621px" width="17" height="18" viewBox="0 0 17 18"><path d="M1.25 8.41 L8.96 2.70 A3.95 3.95 0 0 1 13.66 9.04 L5.03 15.43 A2.85 2.85 0 0 1 1.64 10.85 L9.39 5.12 A1.5 1.5 0 0 1 11.17 7.53 L5.07 12.05" fill="none" stroke="#5d6b84" stroke-width="1.15" stroke-linecap="round"/></svg>
<svg class="r" style="left:957px;top:622px" width="17" height="17" viewBox="0 0 17 17"><defs><linearGradient id="ea13" x1="0" y1="0.2" x2="1" y2="0.3"><stop offset="0" stop-color="#1a8fe0"/><stop offset=".5" stop-color="#30c0cc"/><stop offset="1" stop-color="#6fdc4b"/></linearGradient>
<linearGradient id="eb13" x1="0" y1="0" x2="0.4" y2="1"><stop offset="0" stop-color="#1f8fe0"/><stop offset="1" stop-color="#0a5fc0"/></linearGradient></defs>
<circle cx="8.1" cy="8" r="8" fill="url(#ea13)"/>
<path d="M16.2 9 L16.3 15 L11 16.2 L9 14 Z" fill="#fff"/>
<path d="M.2 8.4 C.1 5.8 2.6 3.8 5.6 3.8 C7.6 3.8 8.9 4.6 9.5 5.8 C5 4.8 4 11 7 13.6 C8 14.6 9.4 15.4 11 15.8 C5.4 17.4 .4 13.6 .2 8.4 Z" fill="url(#eb13)"/>
<path d="M6.2 6.6 C5.8 8.2 5.9 10 7 11.6 C9 14.4 13 14.2 15 11.4 C15.3 10.9 14.8 10.8 14.5 11 C12.8 12 10.6 11.6 9.6 10 C9 9 9 7.8 9.6 6.8 C8.6 5.8 7 5.6 6.2 6.6 Z" fill="#fff"/>
<path d="M5.5 7 C4.6 9.4 5.4 12 7.4 13.8 C9.8 15.8 13.4 15.2 15.3 12.2 C15.6 11.7 15.2 11.4 14.8 11.6 C12.4 13.2 9.4 12.6 7.8 10.4 C7 9.2 6.8 7.8 7.2 6.4 C6.5 6.2 5.8 6.4 5.5 7 Z" fill="#0c4a9c"/></svg>
<svg class="r" style="left:353px;top:651px" width="17" height="13" viewBox="0 0 17 13"><path d="M6.1 .1 H9.7 L16.1 6.5 L9.7 12.9 H6.1 L11.1 8 H.1 V5 H11.1 Z" fill="#0b6fd8"/></svg>
<svg class="r" style="left:745px;top:648px" width="17" height="18" viewBox="0 0 17 18"><path d="M1.25 8.41 L8.96 2.70 A3.95 3.95 0 0 1 13.66 9.04 L5.03 15.43 A2.85 2.85 0 0 1 1.64 10.85 L9.39 5.12 A1.5 1.5 0 0 1 11.17 7.53 L5.07 12.05" fill="none" stroke="#5d6b84" stroke-width="1.15" stroke-linecap="round"/></svg>
<svg class="r" style="left:957px;top:649px" width="17" height="17" viewBox="0 0 17 17"><defs><linearGradient id="ea14" x1="0" y1="0.2" x2="1" y2="0.3"><stop offset="0" stop-color="#1a8fe0"/><stop offset=".5" stop-color="#30c0cc"/><stop offset="1" stop-color="#6fdc4b"/></linearGradient>
<linearGradient id="eb14" x1="0" y1="0" x2="0.4" y2="1"><stop offset="0" stop-color="#1f8fe0"/><stop offset="1" stop-color="#0a5fc0"/></linearGradient></defs>
<circle cx="8.1" cy="8" r="8" fill="url(#ea14)"/>
<path d="M16.2 9 L16.3 15 L11 16.2 L9 14 Z" fill="#fff"/>
<path d="M.2 8.4 C.1 5.8 2.6 3.8 5.6 3.8 C7.6 3.8 8.9 4.6 9.5 5.8 C5 4.8 4 11 7 13.6 C8 14.6 9.4 15.4 11 15.8 C5.4 17.4 .4 13.6 .2 8.4 Z" fill="url(#eb14)"/>
<path d="M6.2 6.6 C5.8 8.2 5.9 10 7 11.6 C9 14.4 13 14.2 15 11.4 C15.3 10.9 14.8 10.8 14.5 11 C12.8 12 10.6 11.6 9.6 10 C9 9 9 7.8 9.6 6.8 C8.6 5.8 7 5.6 6.2 6.6 Z" fill="#fff"/>
<path d="M5.5 7 C4.6 9.4 5.4 12 7.4 13.8 C9.8 15.8 13.4 15.2 15.3 12.2 C15.6 11.7 15.2 11.4 14.8 11.6 C12.4 13.2 9.4 12.6 7.8 10.4 C7 9.2 6.8 7.8 7.2 6.4 C6.5 6.2 5.8 6.4 5.5 7 Z" fill="#0c4a9c"/></svg>
<svg class="r" style="left:353px;top:678px" width="17" height="13" viewBox="0 0 17 13"><path d="M6.1 .1 H9.7 L16.1 6.5 L9.7 12.9 H6.1 L11.1 8 H.1 V5 H11.1 Z" fill="#0b6fd8"/></svg>
<svg class="r" style="left:745px;top:675px" width="17" height="18" viewBox="0 0 17 18"><path d="M1.25 8.41 L8.96 2.70 A3.95 3.95 0 0 1 13.66 9.04 L5.03 15.43 A2.85 2.85 0 0 1 1.64 10.85 L9.39 5.12 A1.5 1.5 0 0 1 11.17 7.53 L5.07 12.05" fill="none" stroke="#5d6b84" stroke-width="1.15" stroke-linecap="round"/></svg>
<svg class="r" style="left:957px;top:676px" width="17" height="17" viewBox="0 0 17 17"><defs><linearGradient id="ea15" x1="0" y1="0.2" x2="1" y2="0.3"><stop offset="0" stop-color="#1a8fe0"/><stop offset=".5" stop-color="#30c0cc"/><stop offset="1" stop-color="#6fdc4b"/></linearGradient>
<linearGradient id="eb15" x1="0" y1="0" x2="0.4" y2="1"><stop offset="0" stop-color="#1f8fe0"/><stop offset="1" stop-color="#0a5fc0"/></linearGradient></defs>
<circle cx="8.1" cy="8" r="8" fill="url(#ea15)"/>
<path d="M16.2 9 L16.3 15 L11 16.2 L9 14 Z" fill="#fff"/>
<path d="M.2 8.4 C.1 5.8 2.6 3.8 5.6 3.8 C7.6 3.8 8.9 4.6 9.5 5.8 C5 4.8 4 11 7 13.6 C8 14.6 9.4 15.4 11 15.8 C5.4 17.4 .4 13.6 .2 8.4 Z" fill="url(#eb15)"/>
<path d="M6.2 6.6 C5.8 8.2 5.9 10 7 11.6 C9 14.4 13 14.2 15 11.4 C15.3 10.9 14.8 10.8 14.5 11 C12.8 12 10.6 11.6 9.6 10 C9 9 9 7.8 9.6 6.8 C8.6 5.8 7 5.6 6.2 6.6 Z" fill="#fff"/>
<path d="M5.5 7 C4.6 9.4 5.4 12 7.4 13.8 C9.8 15.8 13.4 15.2 15.3 12.2 C15.6 11.7 15.2 11.4 14.8 11.6 C12.4 13.2 9.4 12.6 7.8 10.4 C7 9.2 6.8 7.8 7.2 6.4 C6.5 6.2 5.8 6.4 5.5 7 Z" fill="#0c4a9c"/></svg>
<svg class="r" style="left:353px;top:705px" width="17" height="13" viewBox="0 0 17 13"><path d="M6.1 .1 H9.7 L16.1 6.5 L9.7 12.9 H6.1 L11.1 8 H.1 V5 H11.1 Z" fill="#0b6fd8"/></svg>
<svg class="r" style="left:745px;top:702px" width="17" height="18" viewBox="0 0 17 18"><path d="M1.25 8.41 L8.96 2.70 A3.95 3.95 0 0 1 13.66 9.04 L5.03 15.43 A2.85 2.85 0 0 1 1.64 10.85 L9.39 5.12 A1.5 1.5 0 0 1 11.17 7.53 L5.07 12.05" fill="none" stroke="#5d6b84" stroke-width="1.15" stroke-linecap="round"/></svg>
<svg class="r" style="left:957px;top:703px" width="17" height="17" viewBox="0 0 17 17"><defs><linearGradient id="ea16" x1="0" y1="0.2" x2="1" y2="0.3"><stop offset="0" stop-color="#1a8fe0"/><stop offset=".5" stop-color="#30c0cc"/><stop offset="1" stop-color="#6fdc4b"/></linearGradient>
<linearGradient id="eb16" x1="0" y1="0" x2="0.4" y2="1"><stop offset="0" stop-color="#1f8fe0"/><stop offset="1" stop-color="#0a5fc0"/></linearGradient></defs>
<circle cx="8.1" cy="8" r="8" fill="url(#ea16)"/>
<path d="M16.2 9 L16.3 15 L11 16.2 L9 14 Z" fill="#fff"/>
<path d="M.2 8.4 C.1 5.8 2.6 3.8 5.6 3.8 C7.6 3.8 8.9 4.6 9.5 5.8 C5 4.8 4 11 7 13.6 C8 14.6 9.4 15.4 11 15.8 C5.4 17.4 .4 13.6 .2 8.4 Z" fill="url(#eb16)"/>
<path d="M6.2 6.6 C5.8 8.2 5.9 10 7 11.6 C9 14.4 13 14.2 15 11.4 C15.3 10.9 14.8 10.8 14.5 11 C12.8 12 10.6 11.6 9.6 10 C9 9 9 7.8 9.6 6.8 C8.6 5.8 7 5.6 6.2 6.6 Z" fill="#fff"/>
<path d="M5.5 7 C4.6 9.4 5.4 12 7.4 13.8 C9.8 15.8 13.4 15.2 15.3 12.2 C15.6 11.7 15.2 11.4 14.8 11.6 C12.4 13.2 9.4 12.6 7.8 10.4 C7 9.2 6.8 7.8 7.2 6.4 C6.5 6.2 5.8 6.4 5.5 7 Z" fill="#0c4a9c"/></svg>
<svg class="r" style="left:353px;top:732px" width="17" height="13" viewBox="0 0 17 13"><path d="M6.1 .1 H9.7 L16.1 6.5 L9.7 12.9 H6.1 L11.1 8 H.1 V5 H11.1 Z" fill="#0b6fd8"/></svg>
<svg class="r" style="left:745px;top:729px" width="17" height="18" viewBox="0 0 17 18"><path d="M1.25 8.41 L8.96 2.70 A3.95 3.95 0 0 1 13.66 9.04 L5.03 15.43 A2.85 2.85 0 0 1 1.64 10.85 L9.39 5.12 A1.5 1.5 0 0 1 11.17 7.53 L5.07 12.05" fill="none" stroke="#5d6b84" stroke-width="1.15" stroke-linecap="round"/></svg>
<svg class="r" style="left:961px;top:731px" width="10" height="16" viewBox="0 0 10 16"><rect x="1" y="0" width="7" height="5" fill="#fff"/><path d="M1.5 0 V5 M7.5 0 V5" stroke="#555" stroke-width="1"/>
<rect x="3.2" y="1.2" width="1" height="1" fill="#555"/><rect x="5.3" y="1.2" width="1" height="1" fill="#555"/>
<rect x="0" y="4.9" width="9" height="10.2" fill="#3b74b4"/></svg>
<svg class="r" style="left:353px;top:759px" width="17" height="13" viewBox="0 0 17 13"><path d="M6.1 .1 H9.7 L16.1 6.5 L9.7 12.9 H6.1 L11.1 8 H.1 V5 H11.1 Z" fill="#0b6fd8"/></svg>
<svg class="r" style="left:745px;top:756px" width="17" height="18" viewBox="0 0 17 18"><path d="M1.25 8.41 L8.96 2.70 A3.95 3.95 0 0 1 13.66 9.04 L5.03 15.43 A2.85 2.85 0 0 1 1.64 10.85 L9.39 5.12 A1.5 1.5 0 0 1 11.17 7.53 L5.07 12.05" fill="none" stroke="#5d6b84" stroke-width="1.15" stroke-linecap="round"/></svg>
<svg class="r" style="left:961px;top:758px" width="10" height="16" viewBox="0 0 10 16"><rect x="1" y="0" width="7" height="5" fill="#fff"/><path d="M1.5 0 V5 M7.5 0 V5" stroke="#555" stroke-width="1"/>
<rect x="3.2" y="1.2" width="1" height="1" fill="#555"/><rect x="5.3" y="1.2" width="1" height="1" fill="#555"/>
<rect x="0" y="4.9" width="9" height="10.2" fill="#3b74b4"/></svg>
<svg class="r" style="left:353px;top:786px" width="17" height="13" viewBox="0 0 17 13"><path d="M6.1 .1 H9.7 L16.1 6.5 L9.7 12.9 H6.1 L11.1 8 H.1 V5 H11.1 Z" fill="#0b6fd8"/></svg>
<svg class="r" style="left:745px;top:783px" width="17" height="18" viewBox="0 0 17 18"><path d="M1.25 8.41 L8.96 2.70 A3.95 3.95 0 0 1 13.66 9.04 L5.03 15.43 A2.85 2.85 0 0 1 1.64 10.85 L9.39 5.12 A1.5 1.5 0 0 1 11.17 7.53 L5.07 12.05" fill="none" stroke="#5d6b84" stroke-width="1.15" stroke-linecap="round"/></svg>
<svg class="r" style="left:957px;top:784px" width="17" height="17" viewBox="0 0 17 17"><defs><linearGradient id="tbg19" x1="0.9" y1="0" x2="0.3" y2="1"><stop offset="0" stop-color="#2487e6"/><stop offset=".55" stop-color="#1170d8"/><stop offset="1" stop-color="#0a56bd"/></linearGradient></defs>
<path d="M3.5 2.4 C4.2 3.6 4.8 4.6 5.3 5.4 C6 3 8.6 1.1 12 1.2 C13.2 1.2 14.4 1 15.1 .8 C14.9 1.7 14.6 2.2 14.2 2.7 C15.2 3 15.8 3.3 16 3.6 C15.6 4 15.2 4.2 14.9 4.3 C15.6 4.6 15.9 5 16 5.3 C15.7 5.4 15.5 5.4 15.3 5.4 C15.9 6.6 16.1 7.8 16 9 C15.7 13.1 12.4 16.1 8.2 16.1 C4 16.1 .6 13 .3 9 C.2 7.8 .3 6.6 .6 5.8 C1 6.4 1.3 6.8 1.7 7 C1.9 5.2 2.5 3.6 3.5 2.4 Z" fill="url(#tbg19)"/>
<path d="M5.1 5.6 L10.7 5.3 Q12.3 6 12.2 7.6 L11.7 10.6 Q10 12.4 8 12.7 Q5.6 11.6 4.5 9.6 Q4 7 5.1 5.6 Z" fill="#e3f1fe"/>
<path d="M5.4 8.6 L7.6 9.8 L10.6 8.4 M6.4 11 L8.6 11.9" fill="none" stroke="#b4dcf8" stroke-width=".9"/>
<path d="M6.4 4.6 C7.4 2.8 9.6 2.4 11.6 3.2 C10.4 3.6 9 4.2 8 5.2 C7.4 5.6 6.4 5.4 6.4 4.6 Z" fill="#1672da"/>
<circle cx="8.4" cy="3.5" r=".55" fill="#dff0ff"/>
<path d="M3.2 10.8 C5 13.4 8.8 14.2 12 12.2 C10 15 5 14.8 3.2 10.8 Z" fill="#0a4cac"/></svg>
<svg class="r" style="left:353px;top:813px" width="17" height="13" viewBox="0 0 17 13"><path d="M6.1 .1 H9.7 L16.1 6.5 L9.7 12.9 H6.1 L11.1 8 H.1 V5 H11.1 Z" fill="#0b6fd8"/></svg>
<svg class="r" style="left:745px;top:810px" width="17" height="18" viewBox="0 0 17 18"><path d="M1.25 8.41 L8.96 2.70 A3.95 3.95 0 0 1 13.66 9.04 L5.03 15.43 A2.85 2.85 0 0 1 1.64 10.85 L9.39 5.12 A1.5 1.5 0 0 1 11.17 7.53 L5.07 12.05" fill="none" stroke="#5d6b84" stroke-width="1.15" stroke-linecap="round"/></svg>
<svg class="r" style="left:957px;top:811px" width="17" height="17" viewBox="0 0 17 17"><defs><linearGradient id="tbg20" x1="0.9" y1="0" x2="0.3" y2="1"><stop offset="0" stop-color="#2487e6"/><stop offset=".55" stop-color="#1170d8"/><stop offset="1" stop-color="#0a56bd"/></linearGradient></defs>
<path d="M3.5 2.4 C4.2 3.6 4.8 4.6 5.3 5.4 C6 3 8.6 1.1 12 1.2 C13.2 1.2 14.4 1 15.1 .8 C14.9 1.7 14.6 2.2 14.2 2.7 C15.2 3 15.8 3.3 16 3.6 C15.6 4 15.2 4.2 14.9 4.3 C15.6 4.6 15.9 5 16 5.3 C15.7 5.4 15.5 5.4 15.3 5.4 C15.9 6.6 16.1 7.8 16 9 C15.7 13.1 12.4 16.1 8.2 16.1 C4 16.1 .6 13 .3 9 C.2 7.8 .3 6.6 .6 5.8 C1 6.4 1.3 6.8 1.7 7 C1.9 5.2 2.5 3.6 3.5 2.4 Z" fill="url(#tbg20)"/>
<path d="M5.1 5.6 L10.7 5.3 Q12.3 6 12.2 7.6 L11.7 10.6 Q10 12.4 8 12.7 Q5.6 11.6 4.5 9.6 Q4 7 5.1 5.6 Z" fill="#e3f1fe"/>
<path d="M5.4 8.6 L7.6 9.8 L10.6 8.4 M6.4 11 L8.6 11.9" fill="none" stroke="#b4dcf8" stroke-width=".9"/>
<path d="M6.4 4.6 C7.4 2.8 9.6 2.4 11.6 3.2 C10.4 3.6 9 4.2 8 5.2 C7.4 5.6 6.4 5.4 6.4 4.6 Z" fill="#1672da"/>
<circle cx="8.4" cy="3.5" r=".55" fill="#dff0ff"/>
<path d="M3.2 10.8 C5 13.4 8.8 14.2 12 12.2 C10 15 5 14.8 3.2 10.8 Z" fill="#0a4cac"/></svg>
<svg class="r" style="left:353px;top:840px" width="17" height="13" viewBox="0 0 17 13"><path d="M6.1 .1 H9.7 L16.1 6.5 L9.7 12.9 H6.1 L11.1 8 H.1 V5 H11.1 Z" fill="#0b6fd8"/></svg>
<svg class="r" style="left:745px;top:837px" width="17" height="17" viewBox="0 0 17 17"><path d="M1.25 8.41 L8.96 2.70 A3.95 3.95 0 0 1 13.66 9.04 L5.03 15.43 A2.85 2.85 0 0 1 1.64 10.85 L9.39 5.12 A1.5 1.5 0 0 1 11.17 7.53 L5.07 12.05" fill="none" stroke="#5d6b84" stroke-width="1.15" stroke-linecap="round"/></svg>
<svg class="r" style="left:961px;top:839px" width="10" height="15" viewBox="0 0 10 15"><rect x="1" y="0" width="7" height="5" fill="#fff"/><path d="M1.5 0 V5 M7.5 0 V5" stroke="#555" stroke-width="1"/>
<rect x="3.2" y="1.2" width="1" height="1" fill="#555"/><rect x="5.3" y="1.2" width="1" height="1" fill="#555"/>
<rect x="0" y="4.9" width="9" height="10.2" fill="#3b74b4"/></svg>
</div></body></html>
